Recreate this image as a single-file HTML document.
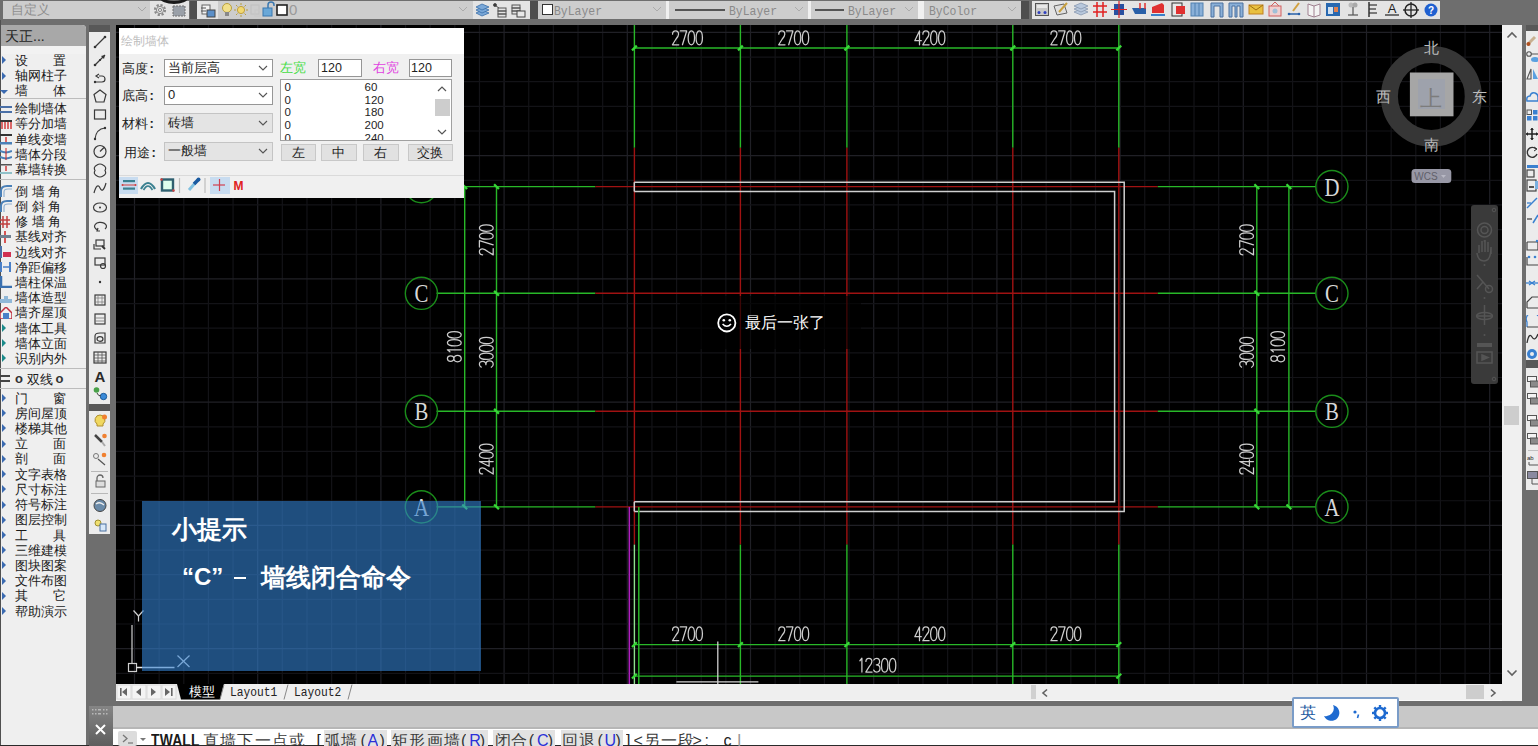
<!DOCTYPE html><html><head><meta charset="utf-8"><style>
*{margin:0;padding:0;box-sizing:border-box}
html,body{width:1538px;height:746px;overflow:hidden;background:#6e6e6e;font-family:"Liberation Sans",sans-serif}
.a{position:absolute}
</style></head><body>

<div class="a" style="left:0;top:0;width:1538px;height:25px;background:#6e6e6e"></div>
<div class="a" style="left:3px;top:1px;width:147px;height:18px;background:#cdcdcd"></div>
<div class="a" style="left:11px;top:2px;font-size:13px;line-height:16px;color:#8f8f8f">自定义</div>
<svg class="a" style="left:137px;top:6px" width="10" height="6"><polyline points="1,1 5,5 9,1" fill="none" stroke="#a8a8a8" stroke-width="1"/></svg>
<div class="a" style="left:150px;top:1px;width:39px;height:18px;background:#e4e4e4"></div>
<svg class="a" style="left:152px;top:2px" width="16" height="16" viewBox="0 0 16 16"><circle cx="8" cy="8" r="5" fill="none" stroke="#8a8a8a" stroke-width="2.2" stroke-dasharray="2.2 1.7"/><circle cx="8" cy="8" r="3.6" fill="none" stroke="#8a8a8a" stroke-width="1"/><circle cx="8" cy="8" r="1.6" fill="none" stroke="#8a8a8a" stroke-width="1"/></svg>
<svg class="a" style="left:171px;top:3px" width="16" height="15"><rect x="2" y="3" width="12" height="10" fill="#9aa0a8" stroke="#707070" stroke-width="1" stroke-dasharray="2 1"/></svg>
<svg class="a" style="left:158px;top:0" width="32" height="6"><path d="M 3 -3 A 13 5.5 0 0 0 29 -3" fill="none" stroke="#1a1a1a" stroke-width="3"/></svg>
<div class="a" style="left:190px;top:1px;width:7px;height:18px;background:#4e4e4e"></div>
<div class="a" style="left:197px;top:1px;width:21px;height:18px;background:#e4e4e4"></div>
<svg class="a" style="left:200px;top:2px" width="16" height="16"><rect x="2" y="3" width="8" height="9" fill="#f4f4f4" stroke="#666" stroke-width="1"/><rect x="7" y="8" width="8" height="7" fill="#5b8fc8" stroke="#444" stroke-width="1"/><line x1="1" y1="6" x2="6" y2="6" stroke="#555"/><line x1="1" y1="9" x2="6" y2="9" stroke="#555"/></svg>
<div class="a" style="left:218px;top:1px;width:255px;height:18px;background:#cdcdcd"></div>
<svg class="a" style="left:220px;top:1px" width="80" height="18"><circle cx="7" cy="7" r="4.5" fill="#f2e08a" stroke="#b8a040" stroke-width="1"/><rect x="5" y="11" width="4" height="4" fill="#888"/><circle cx="21" cy="9" r="3.6" fill="#f2d870" stroke="#c0a040"/><g stroke="#b8a040" stroke-width="1"><line x1="21" y1="2" x2="21" y2="4"/><line x1="21" y1="14" x2="21" y2="16"/><line x1="14" y1="9" x2="16" y2="9"/><line x1="26" y1="9" x2="28" y2="9"/><line x1="16" y1="4" x2="17.5" y2="5.5"/><line x1="26" y1="14" x2="24.5" y2="12.5"/><line x1="26" y1="4" x2="24.5" y2="5.5"/><line x1="16" y1="14" x2="17.5" y2="12.5"/></g><rect x="31" y="4" width="8" height="9" fill="none" stroke="#c0c0c0"/><rect x="35" y="9" width="5" height="6" fill="none" stroke="#c8c8c8"/><rect x="43" y="7" width="9" height="8" fill="#6aa8d8" stroke="#3a78b0"/><path d="M 48 7 V 4 A 3 3 0 0 1 54 4 V 5" fill="none" stroke="#3a78b0" stroke-width="1.5"/><rect x="57" y="4" width="10" height="10" fill="#fff" stroke="#222" stroke-width="1.6"/></svg>
<div class="a" style="left:289px;top:1px;font-size:15px;line-height:18px;color:#9a9a9a">0</div>
<svg class="a" style="left:458px;top:6px" width="10" height="6"><polyline points="1,1 5,5 9,1" fill="none" stroke="#ababab" stroke-width="1"/></svg>
<div class="a" style="left:473px;top:1px;width:57px;height:18px;background:#e4e4e4"></div>
<svg class="a" style="left:474px;top:1px" width="56" height="18"><g fill="#7aa8d8" stroke="#3a6ea8" stroke-width="0.8"><path d="M2 12 L8 15 L15 12 L8 9Z"/><path d="M2 9 L8 12 L15 9 L8 6Z"/><path d="M2 6 L8 9 L15 6 L8 3Z"/></g><g fill="none" stroke="#555" stroke-width="1"><rect x="24" y="7" width="8" height="3"/><rect x="24" y="10" width="8" height="3"/><rect x="24" y="13" width="8" height="3"/><circle cx="21" cy="4" r="1.5" fill="#333"/><line x1="22" y1="5" x2="25" y2="7"/></g><g fill="none" stroke="#555" stroke-width="1"><rect x="38" y="4" width="8" height="3"/><rect x="38" y="7" width="8" height="3"/><rect x="38" y="10" width="8" height="3"/><rect x="43" y="10" width="8" height="6" fill="#e8e8e8" stroke="#444"/></g></svg>
<div class="a" style="left:530px;top:1px;width:8px;height:18px;background:#4e4e4e"></div>
<div class="a" style="left:538px;top:1px;width:128px;height:18px;background:#cdcdcd"></div>
<div class="a" style="left:542px;top:4px;width:11px;height:11px;background:#fff;border:1.5px solid #333"></div><div class="a" style="left:554px;top:1px;font-family:'Liberation Mono';font-size:13px;line-height:18px;color:#8a8a8a;transform:scaleX(0.88);transform-origin:0 0;margin-top:1.5px">ByLayer</div>
<svg class="a" style="left:652px;top:6px" width="10" height="6"><polyline points="1,1 5,5 9,1" fill="none" stroke="#ababab" stroke-width="1"/></svg>
<div class="a" style="left:666px;top:1px;width:3px;height:18px;background:#f0f0f0"></div>
<div class="a" style="left:669px;top:1px;width:139px;height:18px;background:#cdcdcd"></div>
<div class="a" style="left:675px;top:9px;width:50px;height:1.5px;background:#555"></div><div class="a" style="left:729px;top:1px;font-family:'Liberation Mono';font-size:13px;line-height:18px;color:#8a8a8a;transform:scaleX(0.88);transform-origin:0 0;margin-top:1.5px">ByLayer</div>
<svg class="a" style="left:794px;top:6px" width="10" height="6"><polyline points="1,1 5,5 9,1" fill="none" stroke="#ababab" stroke-width="1"/></svg>
<div class="a" style="left:808px;top:1px;width:3px;height:18px;background:#f0f0f0"></div>
<div class="a" style="left:811px;top:1px;width:107px;height:18px;background:#cdcdcd"></div>
<div class="a" style="left:815px;top:9px;width:29px;height:1.5px;background:#555"></div><div class="a" style="left:848px;top:1px;font-family:'Liberation Mono';font-size:13px;line-height:18px;color:#8a8a8a;transform:scaleX(0.88);transform-origin:0 0;margin-top:1.5px">ByLayer</div>
<svg class="a" style="left:904px;top:6px" width="10" height="6"><polyline points="1,1 5,5 9,1" fill="none" stroke="#ababab" stroke-width="1"/></svg>
<div class="a" style="left:918px;top:1px;width:6px;height:18px;background:#f0f0f0"></div>
<div class="a" style="left:924px;top:1px;width:97px;height:18px;background:#cdcdcd"></div>
<div class="a" style="left:929px;top:1px;font-family:'Liberation Mono';font-size:13px;line-height:18px;color:#8a8a8a;transform:scaleX(0.88);transform-origin:0 0;margin-top:1.5px">ByColor</div>
<svg class="a" style="left:1007px;top:6px" width="10" height="6"><polyline points="1,1 5,5 9,1" fill="none" stroke="#ababab" stroke-width="1"/></svg>
<div class="a" style="left:1021px;top:1px;width:8px;height:18px;background:#4e4e4e"></div>
<div class="a" style="left:1032px;top:1px;width:408px;height:18px;background:#e4e4e4"></div>
<svg class="a" style="left:1033.6px;top:1px" width="16" height="18" viewBox="0 0 16 18"><rect x="1.5" y="2.5" width="13" height="12" fill="#c8c8c8" stroke="#555"/><rect x="3" y="4" width="10" height="3" fill="#e8e8e8"/><circle cx="5" cy="11.5" r="1.5" fill="#3040c0"/><circle cx="11" cy="11.5" r="1.5" fill="#3040c0"/></svg>
<svg class="a" style="left:1053.0px;top:1px" width="16" height="18" viewBox="0 0 16 18"><path d="M1 5 L11 3 L14 12 L4 14Z" fill="#e0e0e0" stroke="#666"/><line x1="6" y1="11" x2="14" y2="2" stroke="#c8a040" stroke-width="2"/></svg>
<svg class="a" style="left:1072.5px;top:1px" width="16" height="18" viewBox="0 0 16 18"><g fill="#b8c8dc" stroke="#8898b0" stroke-width="0.8"><path d="M1 11 L8 14 L15 11 L8 8Z"/><path d="M1 8 L8 11 L15 8 L8 5Z"/><path d="M1 5 L8 8 L15 5 L8 2Z"/></g></svg>
<svg class="a" style="left:1091.9px;top:1px" width="16" height="18" viewBox="0 0 16 18"><g stroke="#e02020" stroke-width="1.5"><line x1="5" y1="1" x2="5" y2="16"/><line x1="11" y1="1" x2="11" y2="16"/><line x1="1" y1="5" x2="15" y2="5"/><line x1="1" y1="11" x2="15" y2="11"/></g></svg>
<svg class="a" style="left:1111.4px;top:1px" width="16" height="18" viewBox="0 0 16 18"><rect x="3" y="3" width="10" height="11" fill="#2850a0"/><line x1="8" y1="0" x2="8" y2="17" stroke="#e02020" stroke-width="1.2"/><line x1="0" y1="8.5" x2="16" y2="8.5" stroke="#e02020" stroke-width="1"/></svg>
<svg class="a" style="left:1130.8px;top:1px" width="16" height="18" viewBox="0 0 16 18"><path d="M1 7 L15 7 L15 13 L4 13Z" fill="#2860a8"/><line x1="9" y1="2" x2="9" y2="8" stroke="#e03030" stroke-width="1.5"/><line x1="14" y1="2" x2="14" y2="8" stroke="#e03030" stroke-width="1.5"/></svg>
<svg class="a" style="left:1150.3px;top:1px" width="16" height="18" viewBox="0 0 16 18"><path d="M2 6 L12 2 L14 4 L14 12 L2 12Z" fill="#e03030"/><rect x="1" y="13" width="14" height="2" fill="#3a80c8"/></svg>
<svg class="a" style="left:1169.8px;top:1px" width="16" height="18" viewBox="0 0 16 18"><rect x="2" y="2" width="10" height="13" fill="#e8e8e8" stroke="#333"/><rect x="6" y="5" width="9" height="8" fill="#e03030"/></svg>
<svg class="a" style="left:1189.2px;top:1px" width="16" height="18" viewBox="0 0 16 18"><rect x="2" y="2" width="12" height="13" fill="#8ab0d8" stroke="#5080b0"/><line x1="6" y1="2" x2="6" y2="15" stroke="#5080b0"/><line x1="10" y1="2" x2="10" y2="15" stroke="#5080b0"/></svg>
<svg class="a" style="left:1208.6px;top:1px" width="16" height="18" viewBox="0 0 16 18"><path d="M2 16 V2 H14 V16 H11 V5 H5 V16Z" fill="#8ab0d8" stroke="#4a70a0"/></svg>
<svg class="a" style="left:1228.1px;top:1px" width="16" height="18" viewBox="0 0 16 18"><path d="M1 16 V2 H15 V16 H12 V5 H9 V16 H7 V5 H4 V16Z" fill="#8ab0d8" stroke="#4a70a0"/></svg>
<svg class="a" style="left:1247.5px;top:1px" width="16" height="18" viewBox="0 0 16 18"><rect x="1" y="4" width="14" height="9" fill="#e8c040" stroke="#c08020"/><polyline points="1,4 8,9 15,4" fill="none" stroke="#a07010"/></svg>
<svg class="a" style="left:1267.0px;top:1px" width="16" height="18" viewBox="0 0 16 18"><rect x="2" y="5" width="12" height="10" fill="#f0d0d0" stroke="#d06060"/><path d="M4 5 L8 1 L12 5" fill="none" stroke="#d06060"/><circle cx="8" cy="10" r="2.5" fill="#a0c0d8"/></svg>
<svg class="a" style="left:1286.4px;top:1px" width="16" height="18" viewBox="0 0 16 18"><line x1="2" y1="13" x2="14" y2="13" stroke="#2860a8" stroke-width="1.5"/><circle cx="3" cy="13" r="1.3" fill="#2860a8"/><circle cx="13" cy="13" r="1.3" fill="#2860a8"/><line x1="7" y1="10" x2="13" y2="2" stroke="#d0a040" stroke-width="2"/></svg>
<svg class="a" style="left:1305.9px;top:1px" width="16" height="18" viewBox="0 0 16 18"><path d="M2 3 L8 5 L14 3 V14 L8 16 L2 14Z" fill="#f4f4f4" stroke="#a08090"/><line x1="8" y1="5" x2="8" y2="16" stroke="#a08090"/></svg>
<svg class="a" style="left:1325.3px;top:1px" width="16" height="18" viewBox="0 0 16 18"><rect x="1" y="2" width="14" height="13" fill="#2868b0"/><rect x="3" y="6" width="5" height="7" fill="#d0e0f0"/><rect x="9" y="6" width="4" height="5" fill="#e08050"/></svg>
<svg class="a" style="left:1344.8px;top:1px" width="16" height="18" viewBox="0 0 16 18"><circle cx="6" cy="4" r="2.5" fill="#bbb"/><circle cx="10" cy="4" r="2.5" fill="#aaa"/><line x1="8" y1="6" x2="8" y2="14" stroke="#555" stroke-width="1.2"/><line x1="3" y1="14" x2="13" y2="14" stroke="#555" stroke-width="1.2"/></svg>
<svg class="a" style="left:1364.2px;top:1px" width="16" height="18" viewBox="0 0 16 18"><line x1="5" y1="1" x2="5" y2="16" stroke="#333" stroke-width="1.5"/><line x1="5" y1="4" x2="13" y2="4" stroke="#333" stroke-width="1.2"/><line x1="5" y1="8" x2="12" y2="8" stroke="#333" stroke-width="1.2"/><line x1="5" y1="12" x2="13" y2="12" stroke="#333" stroke-width="1.2"/></svg>
<svg class="a" style="left:1383.7px;top:1px" width="16" height="18" viewBox="0 0 16 18"><text x="8" y="12" font-family="Liberation Sans" font-size="13" text-anchor="middle" fill="#222">A</text><line x1="1" y1="14" x2="15" y2="14" stroke="#222" stroke-width="1.2"/></svg>
<svg class="a" style="left:1403.1px;top:1px" width="16" height="18" viewBox="0 0 16 18"><circle cx="8" cy="9" r="6" fill="none" stroke="#222" stroke-width="1.5"/><line x1="8" y1="1" x2="8" y2="17" stroke="#222" stroke-width="1.3"/><line x1="0" y1="9" x2="16" y2="9" stroke="#222" stroke-width="1.3"/></svg>
<svg class="a" style="left:1422.6px;top:1px" width="16" height="18" viewBox="0 0 16 18"><circle cx="8" cy="9" r="6.5" fill="#2060d0"/><text x="8" y="13" font-family="Liberation Sans" font-size="10" font-weight="bold" text-anchor="middle" fill="#fff">?</text></svg>
<div class="a" style="left:0;top:25px;width:86px;height:721px;background:#efefef;border-top-right-radius:4px"></div>
<div class="a" style="left:0;top:25px;width:86px;height:21px;background:#a8a8a8;border-top-right-radius:4px"></div>
<div class="a" style="left:0;top:46px;width:86px;height:8px;background:#f2f2f2;border-top-right-radius:4px"></div>
<div class="a" style="left:5px;top:28px;font-size:14px;line-height:17px;color:#222">天正...</div>
<div class="a" style="left:0;top:20px;width:1px;height:726px;background:#505050"></div>
<div class="a" style="left:15px;top:51.9px;font-size:13px;line-height:17px;color:#1a1a1a;font-weight:500">设</div>
<div class="a" style="left:53px;top:51.9px;font-size:13px;line-height:17px;color:#1a1a1a;font-weight:500">置</div>
<svg class="a" style="left:1px;top:56.4px" width="6" height="8"><path d="M1 0 L5 4 L1 8Z" fill="#3a6ab0"/></svg>
<div class="a" style="left:15px;top:67.0px;font-size:13px;line-height:17px;color:#1a1a1a;font-weight:500;white-space:pre">轴网柱子</div>
<svg class="a" style="left:1px;top:71.5px" width="6" height="8"><path d="M1 0 L5 4 L1 8Z" fill="#3a6ab0"/></svg>
<div class="a" style="left:15px;top:82.1px;font-size:13px;line-height:17px;color:#1a1a1a;font-weight:500">墙</div>
<div class="a" style="left:53px;top:82.1px;font-size:13px;line-height:17px;color:#1a1a1a;font-weight:500">体</div>
<svg class="a" style="left:0px;top:89.6px" width="9" height="5"><path d="M0 0 L8 0 L4 4Z" fill="#3a6ab0"/></svg>
<div class="a" style="left:15px;top:100.1px;font-size:13px;line-height:17px;color:#1a1a1a;font-weight:500;white-space:pre">绘制墙体</div>
<svg class="a" style="left:0px;top:102.6px" width="12" height="12"><rect x="0" y="3" width="12" height="2" fill="#4a70a8"/><rect x="0" y="8" width="12" height="2" fill="#4a70a8"/></svg>
<div class="a" style="left:15px;top:115.3px;font-size:13px;line-height:17px;color:#1a1a1a;font-weight:500;white-space:pre">等分加墙</div>
<svg class="a" style="left:0px;top:117.8px" width="12" height="12"><rect x="0" y="2" width="12" height="2" fill="#333"/><g stroke="#d02020" stroke-width="1.3"><line x1="2" y1="4" x2="2" y2="11"/><line x1="5" y1="4" x2="5" y2="11"/><line x1="8" y1="4" x2="8" y2="11"/><line x1="11" y1="4" x2="11" y2="11"/></g></svg>
<div class="a" style="left:15px;top:130.5px;font-size:13px;line-height:17px;color:#1a1a1a;font-weight:500;white-space:pre">单线变墙</div>
<svg class="a" style="left:0px;top:133.0px" width="12" height="12"><rect x="0" y="1" width="12" height="2" fill="#333"/><line x1="6" y1="4" x2="6" y2="9" stroke="#d02020" stroke-width="1.3"/><rect x="0" y="9" width="12" height="2.5" fill="#4a80b8"/></svg>
<div class="a" style="left:15px;top:145.7px;font-size:13px;line-height:17px;color:#1a1a1a;font-weight:500;white-space:pre">墙体分段</div>
<svg class="a" style="left:0px;top:148.2px" width="12" height="12"><path d="M0 3 Q6 6 12 3" fill="none" stroke="#4a80b8" stroke-width="2"/><path d="M0 9 Q6 12 12 9" fill="none" stroke="#4a80b8" stroke-width="2"/><line x1="6" y1="0" x2="6" y2="12" stroke="#d02020"/></svg>
<div class="a" style="left:15px;top:160.9px;font-size:13px;line-height:17px;color:#1a1a1a;font-weight:500;white-space:pre">幕墙转换</div>
<svg class="a" style="left:0px;top:163.4px" width="12" height="12"><rect x="0" y="1" width="12" height="1.5" fill="#555"/><line x1="6" y1="3" x2="6" y2="8" stroke="#d02020" stroke-width="1.3"/><rect x="0" y="9" width="12" height="2" fill="#90c0c8"/></svg>
<div class="a" style="left:15px;top:182.8px;font-size:13px;line-height:17px;color:#1a1a1a;font-weight:500;white-space:pre">倒 墙 角</div>
<svg class="a" style="left:0px;top:185.3px" width="12" height="12"><path d="M1 12 V6 Q1 1 7 1 H12" fill="none" stroke="#4a80b8" stroke-width="2"/><path d="M4 12 V7 Q4 4 8 4 H12" fill="none" stroke="#90b0d0" stroke-width="1.2"/></svg>
<div class="a" style="left:15px;top:197.8px;font-size:13px;line-height:17px;color:#1a1a1a;font-weight:500;white-space:pre">倒 斜 角</div>
<svg class="a" style="left:0px;top:200.3px" width="12" height="12"><path d="M1 12 V6 Q1 1 7 1 H12" fill="none" stroke="#4a80b8" stroke-width="2"/><path d="M4 12 V7 Q4 4 8 4 H12" fill="none" stroke="#90b0d0" stroke-width="1.2"/></svg>
<div class="a" style="left:15px;top:213.0px;font-size:13px;line-height:17px;color:#1a1a1a;font-weight:500;white-space:pre">修 墙 角</div>
<svg class="a" style="left:0px;top:215.5px" width="12" height="12"><g stroke="#c04040" stroke-width="1.5"><line x1="3" y1="0" x2="3" y2="12"/><line x1="7" y1="0" x2="7" y2="12"/><line x1="0" y1="4" x2="10" y2="4"/><line x1="0" y1="8" x2="10" y2="8"/></g></svg>
<div class="a" style="left:15px;top:228.1px;font-size:13px;line-height:17px;color:#1a1a1a;font-weight:500;white-space:pre">基线对齐</div>
<svg class="a" style="left:0px;top:230.6px" width="12" height="12"><line x1="5" y1="0" x2="5" y2="12" stroke="#d02020" stroke-width="1.5"/><rect x="0" y="4" width="11" height="3" fill="#708090"/></svg>
<div class="a" style="left:15px;top:243.5px;font-size:13px;line-height:17px;color:#1a1a1a;font-weight:500;white-space:pre">边线对齐</div>
<svg class="a" style="left:0px;top:246.0px" width="12" height="12"><rect x="0" y="0" width="2" height="12" fill="#4a70a8"/><rect x="3" y="6" width="8" height="5" fill="#d03050"/></svg>
<div class="a" style="left:15px;top:258.5px;font-size:13px;line-height:17px;color:#1a1a1a;font-weight:500;white-space:pre">净距偏移</div>
<svg class="a" style="left:0px;top:261.0px" width="12" height="12"><rect x="0" y="1" width="2" height="10" fill="#4a80c8"/><line x1="3" y1="6" x2="10" y2="6" stroke="#4a80c8" stroke-width="1.5"/><rect x="9" y="1" width="2" height="10" fill="#4a80c8"/></svg>
<div class="a" style="left:15px;top:273.5px;font-size:13px;line-height:17px;color:#1a1a1a;font-weight:500;white-space:pre">墙柱保温</div>
<svg class="a" style="left:0px;top:276.0px" width="12" height="12"><path d="M1 0 V11 H12" fill="none" stroke="#3a70b0" stroke-width="2.5"/></svg>
<div class="a" style="left:15px;top:289.1px;font-size:13px;line-height:17px;color:#1a1a1a;font-weight:500;white-space:pre">墙体造型</div>
<svg class="a" style="left:0px;top:291.6px" width="12" height="12"><path d="M0 11 H12 V7 H8 V4 H4 V7 H0Z" fill="#90b8d8"/></svg>
<div class="a" style="left:15px;top:304.1px;font-size:13px;line-height:17px;color:#1a1a1a;font-weight:500;white-space:pre">墙齐屋顶</div>
<svg class="a" style="left:0px;top:306.6px" width="12" height="12"><path d="M0 6 L6 0 L12 6 V12 H0Z" fill="#f0f0f0" stroke="#c03040" stroke-width="1.5"/><rect x="3" y="6" width="6" height="6" fill="#4a80c8"/></svg>
<div class="a" style="left:15px;top:319.5px;font-size:13px;line-height:17px;color:#1a1a1a;font-weight:500;white-space:pre">墙体工具</div>
<svg class="a" style="left:1px;top:324.0px" width="6" height="8"><path d="M1 0 L5 4 L1 8Z" fill="#1a8a8a"/></svg>
<div class="a" style="left:15px;top:334.5px;font-size:13px;line-height:17px;color:#1a1a1a;font-weight:500;white-space:pre">墙体立面</div>
<svg class="a" style="left:1px;top:339.0px" width="6" height="8"><path d="M1 0 L5 4 L1 8Z" fill="#1a8a8a"/></svg>
<div class="a" style="left:15px;top:349.5px;font-size:13px;line-height:17px;color:#1a1a1a;font-weight:500;white-space:pre">识别内外</div>
<svg class="a" style="left:1px;top:354.0px" width="6" height="8"><path d="M1 0 L5 4 L1 8Z" fill="#1a8a8a"/></svg>
<div class="a" style="left:15px;top:389.5px;font-size:13px;line-height:17px;color:#1a1a1a;font-weight:500">门</div>
<div class="a" style="left:53px;top:389.5px;font-size:13px;line-height:17px;color:#1a1a1a;font-weight:500">窗</div>
<svg class="a" style="left:1px;top:394.0px" width="6" height="8"><path d="M1 0 L5 4 L1 8Z" fill="#3a6ab0"/></svg>
<div class="a" style="left:15px;top:404.5px;font-size:13px;line-height:17px;color:#1a1a1a;font-weight:500;white-space:pre">房间屋顶</div>
<svg class="a" style="left:1px;top:409.0px" width="6" height="8"><path d="M1 0 L5 4 L1 8Z" fill="#3a6ab0"/></svg>
<div class="a" style="left:15px;top:419.5px;font-size:13px;line-height:17px;color:#1a1a1a;font-weight:500;white-space:pre">楼梯其他</div>
<svg class="a" style="left:1px;top:424.0px" width="6" height="8"><path d="M1 0 L5 4 L1 8Z" fill="#3a6ab0"/></svg>
<div class="a" style="left:15px;top:435.0px;font-size:13px;line-height:17px;color:#1a1a1a;font-weight:500">立</div>
<div class="a" style="left:53px;top:435.0px;font-size:13px;line-height:17px;color:#1a1a1a;font-weight:500">面</div>
<svg class="a" style="left:1px;top:439.5px" width="6" height="8"><path d="M1 0 L5 4 L1 8Z" fill="#3a6ab0"/></svg>
<div class="a" style="left:15px;top:450.1px;font-size:13px;line-height:17px;color:#1a1a1a;font-weight:500">剖</div>
<div class="a" style="left:53px;top:450.1px;font-size:13px;line-height:17px;color:#1a1a1a;font-weight:500">面</div>
<svg class="a" style="left:1px;top:454.6px" width="6" height="8"><path d="M1 0 L5 4 L1 8Z" fill="#3a6ab0"/></svg>
<div class="a" style="left:15px;top:465.5px;font-size:13px;line-height:17px;color:#1a1a1a;font-weight:500;white-space:pre">文字表格</div>
<svg class="a" style="left:1px;top:470.0px" width="6" height="8"><path d="M1 0 L5 4 L1 8Z" fill="#3a6ab0"/></svg>
<div class="a" style="left:15px;top:480.5px;font-size:13px;line-height:17px;color:#1a1a1a;font-weight:500;white-space:pre">尺寸标注</div>
<svg class="a" style="left:1px;top:485.0px" width="6" height="8"><path d="M1 0 L5 4 L1 8Z" fill="#3a6ab0"/></svg>
<div class="a" style="left:15px;top:496.1px;font-size:13px;line-height:17px;color:#1a1a1a;font-weight:500;white-space:pre">符号标注</div>
<svg class="a" style="left:1px;top:500.6px" width="6" height="8"><path d="M1 0 L5 4 L1 8Z" fill="#3a6ab0"/></svg>
<div class="a" style="left:15px;top:511.0px;font-size:13px;line-height:17px;color:#1a1a1a;font-weight:500;white-space:pre">图层控制</div>
<svg class="a" style="left:1px;top:515.5px" width="6" height="8"><path d="M1 0 L5 4 L1 8Z" fill="#3a6ab0"/></svg>
<div class="a" style="left:15px;top:526.5px;font-size:13px;line-height:17px;color:#1a1a1a;font-weight:500">工</div>
<div class="a" style="left:53px;top:526.5px;font-size:13px;line-height:17px;color:#1a1a1a;font-weight:500">具</div>
<svg class="a" style="left:1px;top:531.0px" width="6" height="8"><path d="M1 0 L5 4 L1 8Z" fill="#3a6ab0"/></svg>
<div class="a" style="left:15px;top:541.5px;font-size:13px;line-height:17px;color:#1a1a1a;font-weight:500;white-space:pre">三维建模</div>
<svg class="a" style="left:1px;top:546.0px" width="6" height="8"><path d="M1 0 L5 4 L1 8Z" fill="#3a6ab0"/></svg>
<div class="a" style="left:15px;top:556.5px;font-size:13px;line-height:17px;color:#1a1a1a;font-weight:500;white-space:pre">图块图案</div>
<svg class="a" style="left:1px;top:561.0px" width="6" height="8"><path d="M1 0 L5 4 L1 8Z" fill="#3a6ab0"/></svg>
<div class="a" style="left:15px;top:572.0px;font-size:13px;line-height:17px;color:#1a1a1a;font-weight:500;white-space:pre">文件布图</div>
<svg class="a" style="left:1px;top:576.5px" width="6" height="8"><path d="M1 0 L5 4 L1 8Z" fill="#3a6ab0"/></svg>
<div class="a" style="left:15px;top:587.0px;font-size:13px;line-height:17px;color:#1a1a1a;font-weight:500">其</div>
<div class="a" style="left:53px;top:587.0px;font-size:13px;line-height:17px;color:#1a1a1a;font-weight:500">它</div>
<svg class="a" style="left:1px;top:591.5px" width="6" height="8"><path d="M1 0 L5 4 L1 8Z" fill="#3a6ab0"/></svg>
<div class="a" style="left:15px;top:602.5px;font-size:13px;line-height:17px;color:#1a1a1a;font-weight:500;white-space:pre">帮助演示</div>
<svg class="a" style="left:1px;top:607.0px" width="6" height="8"><path d="M1 0 L5 4 L1 8Z" fill="#3a6ab0"/></svg>
<div class="a" style="left:0;top:97.5px;width:86px;height:1.2px;background:#bcbcbc"></div>
<div class="a" style="left:0;top:178.5px;width:86px;height:1.2px;background:#bcbcbc"></div>
<div class="a" style="left:0;top:368px;width:86px;height:1.2px;background:#bcbcbc"></div>
<div class="a" style="left:0;top:387.5px;width:86px;height:1.2px;background:#bcbcbc"></div>
<div class="a" style="left:0px;top:375px;width:10px;height:2px;background:#444"></div>
<div class="a" style="left:0px;top:380px;width:10px;height:2px;background:#444"></div>
<div class="a" style="left:15px;top:370px;font-size:13px;line-height:17px;color:#333;font-weight:bold">o</div>
<div class="a" style="left:27px;top:371px;font-size:13px;line-height:17px;color:#1a1a1a;font-weight:500">双线</div>
<div class="a" style="left:55.5px;top:370px;font-size:13px;line-height:17px;color:#333;font-weight:bold">o</div>
<div class="a" style="left:89px;top:25px;width:21px;height:7px;background:#585858"></div>
<div class="a" style="left:89px;top:32px;width:21px;height:372px;background:#ececec"></div>
<div class="a" style="left:89px;top:404px;width:21px;height:7px;background:#585858"></div>
<div class="a" style="left:89px;top:411px;width:21px;height:123px;background:#ececec"></div>
<svg class="a" style="left:91.5px;top:34px" width="16" height="16" viewBox="0 0 16 16"><line x1="3" y1="13" x2="13" y2="3" stroke="#3a3a3a" fill="none" stroke-width="1.2"/><circle cx="3" cy="13" r="1.3" fill="#333"/><circle cx="13" cy="3" r="1.3" fill="#333"/></svg>
<svg class="a" style="left:91.5px;top:52px" width="16" height="16" viewBox="0 0 16 16"><line x1="3" y1="13" x2="13" y2="3" stroke="#3a3a3a" fill="none" stroke-width="1.2"/><circle cx="3" cy="13" r="1.3" fill="#333"/><circle cx="8" cy="8" r="1.1" fill="#333"/><path d="M13 3 L9 4 L12 7Z" fill="#333"/></svg>
<svg class="a" style="left:91.5px;top:70px" width="16" height="16" viewBox="0 0 16 16"><path d="M3 12 H10 A3 3 0 0 0 10 6 H7" stroke="#3a3a3a" fill="none" stroke-width="1.2"/><path d="M7 4 L4 6 L7 8" stroke="#3a3a3a" fill="none" stroke-width="1.2"/><circle cx="3" cy="12" r="1.2" fill="#333"/></svg>
<svg class="a" style="left:91.5px;top:88px" width="16" height="16" viewBox="0 0 16 16"><path d="M8 2 L14 6.5 L12 14 H4 L2 6.5Z" stroke="#3a3a3a" fill="none" stroke-width="1.2"/></svg>
<svg class="a" style="left:91.5px;top:106px" width="16" height="16" viewBox="0 0 16 16"><rect x="2.5" y="4" width="11" height="9" stroke="#3a3a3a" fill="none" stroke-width="1.2"/></svg>
<svg class="a" style="left:91.5px;top:125px" width="16" height="16" viewBox="0 0 16 16"><path d="M3 14 Q4 4 13 3" stroke="#3a3a3a" fill="none" stroke-width="1.2"/><circle cx="3" cy="14" r="1.2" fill="#333"/><circle cx="13" cy="3" r="1.2" fill="#333"/></svg>
<svg class="a" style="left:91.5px;top:143px" width="16" height="16" viewBox="0 0 16 16"><circle cx="8" cy="8.5" r="6" stroke="#3a3a3a" fill="none" stroke-width="1.2"/><line x1="8" y1="8.5" x2="12" y2="4.5" stroke="#3a3a3a" fill="none" stroke-width="1.2"/></svg>
<svg class="a" style="left:91.5px;top:162px" width="16" height="16" viewBox="0 0 16 16"><path d="M5 3 Q8 1 11 3 Q15 5 13 8.5 Q15 12 11 14 Q8 16 5 14 Q1 12 3 8.5 Q1 5 5 3Z" stroke="#3a3a3a" fill="none" stroke-width="1.2"/></svg>
<svg class="a" style="left:91.5px;top:180px" width="16" height="16" viewBox="0 0 16 16"><path d="M2 13 Q5 2 8 8 Q11 14 14 3" stroke="#3a3a3a" fill="none" stroke-width="1.2"/></svg>
<svg class="a" style="left:91.5px;top:199px" width="16" height="16" viewBox="0 0 16 16"><ellipse cx="8" cy="8.5" rx="6.5" ry="4.5" stroke="#3a3a3a" fill="none" stroke-width="1.2"/><circle cx="8" cy="8.5" r="1" fill="#333"/></svg>
<svg class="a" style="left:91.5px;top:218px" width="16" height="16" viewBox="0 0 16 16"><path d="M13 11 A6 4 0 1 0 6 12" stroke="#3a3a3a" fill="none" stroke-width="1.2"/><path d="M6 10 L5 13 L8 13" stroke="#3a3a3a" fill="none" stroke-width="1.2"/></svg>
<svg class="a" style="left:91.5px;top:236px" width="16" height="16" viewBox="0 0 16 16"><rect x="4" y="4" width="8" height="6" stroke="#3a3a3a" fill="none" stroke-width="1.2"/><path d="M2 8 L2 13 L9 13" stroke="#3a3a3a" fill="none" stroke-width="1.2"/><path d="M10 10 L13 13" stroke="#333" stroke-width="2"/></svg>
<svg class="a" style="left:91.5px;top:255px" width="16" height="16" viewBox="0 0 16 16"><rect x="3" y="3" width="10" height="7" stroke="#3a3a3a" fill="none" stroke-width="1.2"/><circle cx="11" cy="11" r="2.5" stroke="#3a3a3a" fill="none" stroke-width="1.2"/></svg>
<svg class="a" style="left:91.5px;top:274px" width="16" height="16" viewBox="0 0 16 16"><circle cx="8" cy="8" r="1.2" fill="#333"/></svg>
<svg class="a" style="left:91.5px;top:292px" width="16" height="16" viewBox="0 0 16 16"><rect x="3" y="3" width="10" height="10" stroke="#3a3a3a" fill="none" stroke-width="1.2"/><path d="M3 6 L13 6 M3 10 L13 10 M6 3 L6 13 M10 3 L10 13" stroke="#777" stroke-width="0.7"/></svg>
<svg class="a" style="left:91.5px;top:311px" width="16" height="16" viewBox="0 0 16 16"><rect x="3" y="3" width="10" height="10" stroke="#3a3a3a" fill="none" stroke-width="1.2"/><path d="M3 7 L13 7 M3 10 L13 10" stroke="#777" stroke-width="0.8"/></svg>
<svg class="a" style="left:91.5px;top:330px" width="16" height="16" viewBox="0 0 16 16"><path d="M3 13 V6 Q3 3 8 3 H13 V13Z" stroke="#3a3a3a" fill="none" stroke-width="1.2"/><ellipse cx="8" cy="9" rx="3" ry="2.3" stroke="#3a3a3a" fill="none" stroke-width="1.2"/></svg>
<svg class="a" style="left:91.5px;top:349px" width="16" height="16" viewBox="0 0 16 16"><rect x="2" y="3" width="12" height="11" stroke="#3a3a3a" fill="none" stroke-width="1.2"/><path d="M2 6 H14 M2 9 H14 M2 12 H14 M6 3 V14 M10 3 V14" stroke="#555" stroke-width="0.8"/></svg>
<svg class="a" style="left:91.5px;top:368px" width="16" height="16" viewBox="0 0 16 16"><text x="8" y="14" text-anchor="middle" font-family="Liberation Sans" font-size="15" font-weight="bold" fill="#2a2a2a">A</text></svg>
<svg class="a" style="left:91.5px;top:385px" width="16" height="16" viewBox="0 0 16 16"><circle cx="4.5" cy="5" r="2.8" fill="#48a048"/><circle cx="11.5" cy="11.5" r="3.2" fill="#3a8ad8" stroke="#1a5a9a"/><path d="M5 8 Q6 11 9 11" fill="none" stroke="#444"/></svg>
<svg class="a" style="left:91.5px;top:413px" width="16" height="16" viewBox="0 0 16 16"><path d="M8 2 A5 5 0 0 1 11 11 V13 H5 V11 A5 5 0 0 1 8 2Z" fill="#f0d860" stroke="#b09030"/><circle cx="12.5" cy="4" r="2.5" fill="#f08030"/></svg>
<svg class="a" style="left:91.5px;top:432px" width="16" height="16" viewBox="0 0 16 16"><path d="M3 3 L10 10" stroke="#444" stroke-width="2.5"/><path d="M10 10 L13 14" stroke="#aaa" stroke-width="2"/><circle cx="12.5" cy="4" r="2.3" fill="#f08030"/></svg>
<svg class="a" style="left:91.5px;top:451px" width="16" height="16" viewBox="0 0 16 16"><circle cx="4" cy="5" r="2.5" fill="none" stroke="#777"/><circle cx="12" cy="4" r="2.3" fill="#f08030"/><path d="M6 8 L13 14" stroke="#555" stroke-width="1.2"/></svg>
<svg class="a" style="left:91.5px;top:473px" width="16" height="16" viewBox="0 0 16 16"><rect x="4" y="8" width="9" height="6" fill="#ddd" stroke="#666"/><path d="M5 8 V5 A3 3 0 0 1 11 5" fill="none" stroke="#666" stroke-width="1.3"/></svg>
<svg class="a" style="left:91.5px;top:497px" width="16" height="16" viewBox="0 0 16 16"><circle cx="8" cy="8.5" r="6" fill="#6a8aa8" stroke="#444"/><path d="M4 7 Q8 4 12 8" fill="none" stroke="#eee" stroke-width="1.3"/></svg>
<svg class="a" style="left:91.5px;top:516px" width="16" height="16" viewBox="0 0 16 16"><circle cx="6" cy="7" r="3" fill="#f0e070" stroke="#a09030"/><rect x="8" y="8" width="6" height="7" fill="#d8e8f8" stroke="#4a70a0"/></svg>
<div class="a" style="left:91px;top:470.5px;width:17px;height:1px;background:#b8b8b8"></div>
<div class="a" style="left:91px;top:493px;width:17px;height:1px;background:#b8b8b8"></div>
<div class="a" style="left:116px;top:25px;width:1386px;height:659px;background:#000;overflow:hidden">
<svg width="1386" height="659" style="position:absolute;left:0;top:0"><line x1="18.50" y1="0" x2="18.50" y2="660" stroke="#202026" stroke-width="1.2"/>
<line x1="43.14" y1="0" x2="43.14" y2="660" stroke="#131317" stroke-width="1.2"/>
<line x1="67.78" y1="0" x2="67.78" y2="660" stroke="#131317" stroke-width="1.2"/>
<line x1="92.42" y1="0" x2="92.42" y2="660" stroke="#131317" stroke-width="1.2"/>
<line x1="117.06" y1="0" x2="117.06" y2="660" stroke="#131317" stroke-width="1.2"/>
<line x1="141.70" y1="0" x2="141.70" y2="660" stroke="#202026" stroke-width="1.2"/>
<line x1="166.34" y1="0" x2="166.34" y2="660" stroke="#131317" stroke-width="1.2"/>
<line x1="190.98" y1="0" x2="190.98" y2="660" stroke="#131317" stroke-width="1.2"/>
<line x1="215.62" y1="0" x2="215.62" y2="660" stroke="#131317" stroke-width="1.2"/>
<line x1="240.26" y1="0" x2="240.26" y2="660" stroke="#131317" stroke-width="1.2"/>
<line x1="264.90" y1="0" x2="264.90" y2="660" stroke="#202026" stroke-width="1.2"/>
<line x1="289.54" y1="0" x2="289.54" y2="660" stroke="#131317" stroke-width="1.2"/>
<line x1="314.18" y1="0" x2="314.18" y2="660" stroke="#131317" stroke-width="1.2"/>
<line x1="338.82" y1="0" x2="338.82" y2="660" stroke="#131317" stroke-width="1.2"/>
<line x1="363.46" y1="0" x2="363.46" y2="660" stroke="#131317" stroke-width="1.2"/>
<line x1="388.10" y1="0" x2="388.10" y2="660" stroke="#202026" stroke-width="1.2"/>
<line x1="412.74" y1="0" x2="412.74" y2="660" stroke="#131317" stroke-width="1.2"/>
<line x1="437.38" y1="0" x2="437.38" y2="660" stroke="#131317" stroke-width="1.2"/>
<line x1="462.02" y1="0" x2="462.02" y2="660" stroke="#131317" stroke-width="1.2"/>
<line x1="486.66" y1="0" x2="486.66" y2="660" stroke="#131317" stroke-width="1.2"/>
<line x1="511.30" y1="0" x2="511.30" y2="660" stroke="#202026" stroke-width="1.2"/>
<line x1="535.94" y1="0" x2="535.94" y2="660" stroke="#131317" stroke-width="1.2"/>
<line x1="560.58" y1="0" x2="560.58" y2="660" stroke="#131317" stroke-width="1.2"/>
<line x1="585.22" y1="0" x2="585.22" y2="660" stroke="#131317" stroke-width="1.2"/>
<line x1="609.86" y1="0" x2="609.86" y2="660" stroke="#131317" stroke-width="1.2"/>
<line x1="634.50" y1="0" x2="634.50" y2="660" stroke="#202026" stroke-width="1.2"/>
<line x1="659.14" y1="0" x2="659.14" y2="660" stroke="#131317" stroke-width="1.2"/>
<line x1="683.78" y1="0" x2="683.78" y2="660" stroke="#131317" stroke-width="1.2"/>
<line x1="708.42" y1="0" x2="708.42" y2="660" stroke="#131317" stroke-width="1.2"/>
<line x1="733.06" y1="0" x2="733.06" y2="660" stroke="#131317" stroke-width="1.2"/>
<line x1="757.70" y1="0" x2="757.70" y2="660" stroke="#202026" stroke-width="1.2"/>
<line x1="782.34" y1="0" x2="782.34" y2="660" stroke="#131317" stroke-width="1.2"/>
<line x1="806.98" y1="0" x2="806.98" y2="660" stroke="#131317" stroke-width="1.2"/>
<line x1="831.62" y1="0" x2="831.62" y2="660" stroke="#131317" stroke-width="1.2"/>
<line x1="856.26" y1="0" x2="856.26" y2="660" stroke="#131317" stroke-width="1.2"/>
<line x1="880.90" y1="0" x2="880.90" y2="660" stroke="#202026" stroke-width="1.2"/>
<line x1="905.54" y1="0" x2="905.54" y2="660" stroke="#131317" stroke-width="1.2"/>
<line x1="930.18" y1="0" x2="930.18" y2="660" stroke="#131317" stroke-width="1.2"/>
<line x1="954.82" y1="0" x2="954.82" y2="660" stroke="#131317" stroke-width="1.2"/>
<line x1="979.46" y1="0" x2="979.46" y2="660" stroke="#131317" stroke-width="1.2"/>
<line x1="1004.10" y1="0" x2="1004.10" y2="660" stroke="#202026" stroke-width="1.2"/>
<line x1="1028.74" y1="0" x2="1028.74" y2="660" stroke="#131317" stroke-width="1.2"/>
<line x1="1053.38" y1="0" x2="1053.38" y2="660" stroke="#131317" stroke-width="1.2"/>
<line x1="1078.02" y1="0" x2="1078.02" y2="660" stroke="#131317" stroke-width="1.2"/>
<line x1="1102.66" y1="0" x2="1102.66" y2="660" stroke="#131317" stroke-width="1.2"/>
<line x1="1127.30" y1="0" x2="1127.30" y2="660" stroke="#202026" stroke-width="1.2"/>
<line x1="1151.94" y1="0" x2="1151.94" y2="660" stroke="#131317" stroke-width="1.2"/>
<line x1="1176.58" y1="0" x2="1176.58" y2="660" stroke="#131317" stroke-width="1.2"/>
<line x1="1201.22" y1="0" x2="1201.22" y2="660" stroke="#131317" stroke-width="1.2"/>
<line x1="1225.86" y1="0" x2="1225.86" y2="660" stroke="#131317" stroke-width="1.2"/>
<line x1="1250.50" y1="0" x2="1250.50" y2="660" stroke="#202026" stroke-width="1.2"/>
<line x1="1275.14" y1="0" x2="1275.14" y2="660" stroke="#131317" stroke-width="1.2"/>
<line x1="1299.78" y1="0" x2="1299.78" y2="660" stroke="#131317" stroke-width="1.2"/>
<line x1="1324.42" y1="0" x2="1324.42" y2="660" stroke="#131317" stroke-width="1.2"/>
<line x1="1349.06" y1="0" x2="1349.06" y2="660" stroke="#131317" stroke-width="1.2"/>
<line x1="1373.70" y1="0" x2="1373.70" y2="660" stroke="#202026" stroke-width="1.2"/>
<line x1="0" y1="7.40" x2="1386" y2="7.40" stroke="#202026" stroke-width="1.2"/>
<line x1="0" y1="32.05" x2="1386" y2="32.05" stroke="#131317" stroke-width="1.2"/>
<line x1="0" y1="56.70" x2="1386" y2="56.70" stroke="#131317" stroke-width="1.2"/>
<line x1="0" y1="81.35" x2="1386" y2="81.35" stroke="#131317" stroke-width="1.2"/>
<line x1="0" y1="106.00" x2="1386" y2="106.00" stroke="#131317" stroke-width="1.2"/>
<line x1="0" y1="130.65" x2="1386" y2="130.65" stroke="#202026" stroke-width="1.2"/>
<line x1="0" y1="155.30" x2="1386" y2="155.30" stroke="#131317" stroke-width="1.2"/>
<line x1="0" y1="179.95" x2="1386" y2="179.95" stroke="#131317" stroke-width="1.2"/>
<line x1="0" y1="204.60" x2="1386" y2="204.60" stroke="#131317" stroke-width="1.2"/>
<line x1="0" y1="229.25" x2="1386" y2="229.25" stroke="#131317" stroke-width="1.2"/>
<line x1="0" y1="253.90" x2="1386" y2="253.90" stroke="#202026" stroke-width="1.2"/>
<line x1="0" y1="278.55" x2="1386" y2="278.55" stroke="#131317" stroke-width="1.2"/>
<line x1="0" y1="303.20" x2="1386" y2="303.20" stroke="#131317" stroke-width="1.2"/>
<line x1="0" y1="327.85" x2="1386" y2="327.85" stroke="#131317" stroke-width="1.2"/>
<line x1="0" y1="352.50" x2="1386" y2="352.50" stroke="#131317" stroke-width="1.2"/>
<line x1="0" y1="377.15" x2="1386" y2="377.15" stroke="#202026" stroke-width="1.2"/>
<line x1="0" y1="401.80" x2="1386" y2="401.80" stroke="#131317" stroke-width="1.2"/>
<line x1="0" y1="426.45" x2="1386" y2="426.45" stroke="#131317" stroke-width="1.2"/>
<line x1="0" y1="451.10" x2="1386" y2="451.10" stroke="#131317" stroke-width="1.2"/>
<line x1="0" y1="475.75" x2="1386" y2="475.75" stroke="#131317" stroke-width="1.2"/>
<line x1="0" y1="500.40" x2="1386" y2="500.40" stroke="#202026" stroke-width="1.2"/>
<line x1="0" y1="525.05" x2="1386" y2="525.05" stroke="#131317" stroke-width="1.2"/>
<line x1="0" y1="549.70" x2="1386" y2="549.70" stroke="#131317" stroke-width="1.2"/>
<line x1="0" y1="574.35" x2="1386" y2="574.35" stroke="#131317" stroke-width="1.2"/>
<line x1="0" y1="599.00" x2="1386" y2="599.00" stroke="#131317" stroke-width="1.2"/>
<line x1="0" y1="623.65" x2="1386" y2="623.65" stroke="#202026" stroke-width="1.2"/>
<line x1="0" y1="648.30" x2="1386" y2="648.30" stroke="#131317" stroke-width="1.2"/><line x1="518.40" y1="0.00" x2="518.40" y2="122.80" stroke="#28b828" stroke-width="1.4" />
<line x1="518.40" y1="122.80" x2="518.40" y2="519.60" stroke="#a01212" stroke-width="1.4" />
<line x1="624.40" y1="0.00" x2="624.40" y2="122.80" stroke="#28b828" stroke-width="1.4" />
<line x1="624.40" y1="122.80" x2="624.40" y2="519.60" stroke="#a01212" stroke-width="1.4" />
<line x1="624.40" y1="519.60" x2="624.40" y2="659.00" stroke="#28b828" stroke-width="1.4" />
<line x1="730.90" y1="0.00" x2="730.90" y2="122.80" stroke="#28b828" stroke-width="1.4" />
<line x1="730.90" y1="122.80" x2="730.90" y2="519.60" stroke="#a01212" stroke-width="1.4" />
<line x1="730.90" y1="519.60" x2="730.90" y2="659.00" stroke="#28b828" stroke-width="1.4" />
<line x1="896.80" y1="0.00" x2="896.80" y2="122.80" stroke="#28b828" stroke-width="1.4" />
<line x1="896.80" y1="122.80" x2="896.80" y2="519.60" stroke="#a01212" stroke-width="1.4" />
<line x1="896.80" y1="519.60" x2="896.80" y2="659.00" stroke="#28b828" stroke-width="1.4" />
<line x1="1002.80" y1="0.00" x2="1002.80" y2="122.80" stroke="#28b828" stroke-width="1.4" />
<line x1="1002.80" y1="122.80" x2="1002.80" y2="519.60" stroke="#a01212" stroke-width="1.4" />
<line x1="1002.80" y1="519.60" x2="1002.80" y2="659.00" stroke="#28b828" stroke-width="1.4" />
<line x1="518.40" y1="519.60" x2="518.40" y2="659.00" stroke="#8ee08e" stroke-width="1.4" />
<line x1="320.50" y1="161.60" x2="479.40" y2="161.60" stroke="#28b828" stroke-width="1.4" />
<line x1="479.40" y1="161.60" x2="1041.80" y2="161.60" stroke="#a01212" stroke-width="1.4" />
<line x1="1041.80" y1="161.60" x2="1199.70" y2="161.60" stroke="#28b828" stroke-width="1.4" />
<line x1="320.50" y1="268.30" x2="479.40" y2="268.30" stroke="#28b828" stroke-width="1.4" />
<line x1="479.40" y1="268.30" x2="1041.80" y2="268.30" stroke="#a01212" stroke-width="1.4" />
<line x1="1041.80" y1="268.30" x2="1199.70" y2="268.30" stroke="#28b828" stroke-width="1.4" />
<line x1="320.50" y1="386.30" x2="479.40" y2="386.30" stroke="#28b828" stroke-width="1.4" />
<line x1="479.40" y1="386.30" x2="1041.80" y2="386.30" stroke="#a01212" stroke-width="1.4" />
<line x1="1041.80" y1="386.30" x2="1199.70" y2="386.30" stroke="#28b828" stroke-width="1.4" />
<line x1="320.50" y1="481.90" x2="479.40" y2="481.90" stroke="#28b828" stroke-width="1.4" />
<line x1="479.40" y1="481.90" x2="1041.80" y2="481.90" stroke="#a01212" stroke-width="1.4" />
<line x1="1041.80" y1="481.90" x2="1199.70" y2="481.90" stroke="#28b828" stroke-width="1.4" />
<line x1="518.40" y1="23.00" x2="1002.80" y2="23.00" stroke="#28b828" stroke-width="1.4" />
<line x1="518.40" y1="619.60" x2="1002.80" y2="619.60" stroke="#28b828" stroke-width="1.4" />
<line x1="518.40" y1="651.10" x2="1002.80" y2="651.10" stroke="#28b828" stroke-width="1.4" />
<line x1="348.70" y1="161.60" x2="348.70" y2="481.90" stroke="#28b828" stroke-width="1.4" />
<line x1="380.50" y1="161.60" x2="380.50" y2="481.90" stroke="#28b828" stroke-width="1.4" />
<line x1="1140.80" y1="161.60" x2="1140.80" y2="481.90" stroke="#28b828" stroke-width="1.4" />
<line x1="1172.90" y1="161.60" x2="1172.90" y2="481.90" stroke="#28b828" stroke-width="1.4" />
<line x1="516.00" y1="25.40" x2="520.80" y2="20.60" stroke="#38d838" stroke-width="2.2" />
<line x1="516.00" y1="622.00" x2="520.80" y2="617.20" stroke="#38d838" stroke-width="2.2" />
<line x1="622.00" y1="25.40" x2="626.80" y2="20.60" stroke="#38d838" stroke-width="2.2" />
<line x1="622.00" y1="622.00" x2="626.80" y2="617.20" stroke="#38d838" stroke-width="2.2" />
<line x1="728.50" y1="25.40" x2="733.30" y2="20.60" stroke="#38d838" stroke-width="2.2" />
<line x1="728.50" y1="622.00" x2="733.30" y2="617.20" stroke="#38d838" stroke-width="2.2" />
<line x1="894.40" y1="25.40" x2="899.20" y2="20.60" stroke="#38d838" stroke-width="2.2" />
<line x1="894.40" y1="622.00" x2="899.20" y2="617.20" stroke="#38d838" stroke-width="2.2" />
<line x1="1000.40" y1="25.40" x2="1005.20" y2="20.60" stroke="#38d838" stroke-width="2.2" />
<line x1="1000.40" y1="622.00" x2="1005.20" y2="617.20" stroke="#38d838" stroke-width="2.2" />
<line x1="516.00" y1="653.50" x2="520.80" y2="648.70" stroke="#38d838" stroke-width="2.2" />
<line x1="1000.40" y1="653.50" x2="1005.20" y2="648.70" stroke="#38d838" stroke-width="2.2" />
<line x1="378.10" y1="159.20" x2="382.90" y2="164.00" stroke="#38d838" stroke-width="2.2" />
<line x1="1138.40" y1="159.20" x2="1143.20" y2="164.00" stroke="#38d838" stroke-width="2.2" />
<line x1="378.10" y1="265.90" x2="382.90" y2="270.70" stroke="#38d838" stroke-width="2.2" />
<line x1="1138.40" y1="265.90" x2="1143.20" y2="270.70" stroke="#38d838" stroke-width="2.2" />
<line x1="378.10" y1="383.90" x2="382.90" y2="388.70" stroke="#38d838" stroke-width="2.2" />
<line x1="1138.40" y1="383.90" x2="1143.20" y2="388.70" stroke="#38d838" stroke-width="2.2" />
<line x1="378.10" y1="479.50" x2="382.90" y2="484.30" stroke="#38d838" stroke-width="2.2" />
<line x1="1138.40" y1="479.50" x2="1143.20" y2="484.30" stroke="#38d838" stroke-width="2.2" />
<line x1="346.30" y1="159.20" x2="351.10" y2="164.00" stroke="#38d838" stroke-width="2.2" />
<line x1="1170.50" y1="159.20" x2="1175.30" y2="164.00" stroke="#38d838" stroke-width="2.2" />
<line x1="346.30" y1="479.50" x2="351.10" y2="484.30" stroke="#38d838" stroke-width="2.2" />
<line x1="1170.50" y1="479.50" x2="1175.30" y2="484.30" stroke="#38d838" stroke-width="2.2" />
<polyline points="518.3,157.2 1008.2,157.2 1008.2,486.4 518.3,486.4" fill="none" stroke="#cfcfcf" stroke-width="1.5"/>
<polyline points="518.3,166.5 998.5999999999999,166.5 998.5999999999999,476.7 518.3,476.7" fill="none" stroke="#cfcfcf" stroke-width="1.5"/>
<line x1="518.30" y1="157.20" x2="518.30" y2="166.50" stroke="#cfcfcf" stroke-width="1.5" />
<line x1="518.30" y1="476.70" x2="518.30" y2="486.40" stroke="#cfcfcf" stroke-width="1.5" />
<line x1="513.30" y1="482.00" x2="513.30" y2="659.00" stroke="#b020c0" stroke-width="1.5" />
<line x1="522.80" y1="482.00" x2="522.80" y2="659.00" stroke="#28b828" stroke-width="1.5" />
<circle cx="305.4" cy="161.6" r="16.1" fill="none" stroke="#1a8c1a" stroke-width="1.4"/>
<text x="305.4" y="170.79999999999998" text-anchor="middle" font-family="Liberation Serif" font-size="26" fill="#d8d8d8" transform="translate(305.4 0) scale(0.8 1) translate(-305.4 0)">D</text>
<circle cx="1215.9" cy="161.6" r="16.1" fill="none" stroke="#1a8c1a" stroke-width="1.4"/>
<text x="1215.9" y="170.79999999999998" text-anchor="middle" font-family="Liberation Serif" font-size="26" fill="#d8d8d8" transform="translate(1215.9 0) scale(0.8 1) translate(-1215.9 0)">D</text>
<circle cx="305.4" cy="268.3" r="16.1" fill="none" stroke="#1a8c1a" stroke-width="1.4"/>
<text x="305.4" y="277.5" text-anchor="middle" font-family="Liberation Serif" font-size="26" fill="#d8d8d8" transform="translate(305.4 0) scale(0.8 1) translate(-305.4 0)">C</text>
<circle cx="1215.9" cy="268.3" r="16.1" fill="none" stroke="#1a8c1a" stroke-width="1.4"/>
<text x="1215.9" y="277.5" text-anchor="middle" font-family="Liberation Serif" font-size="26" fill="#d8d8d8" transform="translate(1215.9 0) scale(0.8 1) translate(-1215.9 0)">C</text>
<circle cx="305.4" cy="386.3" r="16.1" fill="none" stroke="#1a8c1a" stroke-width="1.4"/>
<text x="305.4" y="395.5" text-anchor="middle" font-family="Liberation Serif" font-size="26" fill="#d8d8d8" transform="translate(305.4 0) scale(0.8 1) translate(-305.4 0)">B</text>
<circle cx="1215.9" cy="386.3" r="16.1" fill="none" stroke="#1a8c1a" stroke-width="1.4"/>
<text x="1215.9" y="395.5" text-anchor="middle" font-family="Liberation Serif" font-size="26" fill="#d8d8d8" transform="translate(1215.9 0) scale(0.8 1) translate(-1215.9 0)">B</text>
<circle cx="305.4" cy="481.9" r="16.1" fill="none" stroke="#1a8c1a" stroke-width="1.4"/>
<text x="305.4" y="491.09999999999997" text-anchor="middle" font-family="Liberation Serif" font-size="26" fill="#d8d8d8" transform="translate(305.4 0) scale(0.8 1) translate(-305.4 0)">A</text>
<circle cx="1215.9" cy="481.9" r="16.1" fill="none" stroke="#1a8c1a" stroke-width="1.4"/>
<text x="1215.9" y="491.09999999999997" text-anchor="middle" font-family="Liberation Serif" font-size="26" fill="#d8d8d8" transform="translate(1215.9 0) scale(0.8 1) translate(-1215.9 0)">A</text>
<g transform="translate(571.40 12.85) translate(-15.15 -7)" fill="none" stroke="#cdcdcd" stroke-width="1.25" stroke-linecap="round" stroke-linejoin="round"><path transform="translate(0.0 0)" d="M0.3 3.3 C0.3 1.2 1.6 0.1 3.3 0.1 C5 0.1 6.3 1.3 6.3 3.3 C6.3 5.2 5 6.8 3.6 8.4 L0.2 13.9 L6.5 13.9"/><path transform="translate(7.9 0)" d="M0.1 0.1 L6.5 0.1 L2.3 13.9"/><path transform="translate(15.8 0)" d="M3.3 0.1 C5.2 0.1 6.5 3 6.5 7 C6.5 11 5.2 13.9 3.3 13.9 C1.4 13.9 0.1 11 0.1 7 C0.1 3 1.4 0.1 3.3 0.1Z"/><path transform="translate(23.7 0)" d="M3.3 0.1 C5.2 0.1 6.5 3 6.5 7 C6.5 11 5.2 13.9 3.3 13.9 C1.4 13.9 0.1 11 0.1 7 C0.1 3 1.4 0.1 3.3 0.1Z"/></g>
<g transform="translate(571.40 608.85) translate(-15.15 -7)" fill="none" stroke="#cdcdcd" stroke-width="1.25" stroke-linecap="round" stroke-linejoin="round"><path transform="translate(0.0 0)" d="M0.3 3.3 C0.3 1.2 1.6 0.1 3.3 0.1 C5 0.1 6.3 1.3 6.3 3.3 C6.3 5.2 5 6.8 3.6 8.4 L0.2 13.9 L6.5 13.9"/><path transform="translate(7.9 0)" d="M0.1 0.1 L6.5 0.1 L2.3 13.9"/><path transform="translate(15.8 0)" d="M3.3 0.1 C5.2 0.1 6.5 3 6.5 7 C6.5 11 5.2 13.9 3.3 13.9 C1.4 13.9 0.1 11 0.1 7 C0.1 3 1.4 0.1 3.3 0.1Z"/><path transform="translate(23.7 0)" d="M3.3 0.1 C5.2 0.1 6.5 3 6.5 7 C6.5 11 5.2 13.9 3.3 13.9 C1.4 13.9 0.1 11 0.1 7 C0.1 3 1.4 0.1 3.3 0.1Z"/></g>
<g transform="translate(677.65 12.85) translate(-15.15 -7)" fill="none" stroke="#cdcdcd" stroke-width="1.25" stroke-linecap="round" stroke-linejoin="round"><path transform="translate(0.0 0)" d="M0.3 3.3 C0.3 1.2 1.6 0.1 3.3 0.1 C5 0.1 6.3 1.3 6.3 3.3 C6.3 5.2 5 6.8 3.6 8.4 L0.2 13.9 L6.5 13.9"/><path transform="translate(7.9 0)" d="M0.1 0.1 L6.5 0.1 L2.3 13.9"/><path transform="translate(15.8 0)" d="M3.3 0.1 C5.2 0.1 6.5 3 6.5 7 C6.5 11 5.2 13.9 3.3 13.9 C1.4 13.9 0.1 11 0.1 7 C0.1 3 1.4 0.1 3.3 0.1Z"/><path transform="translate(23.7 0)" d="M3.3 0.1 C5.2 0.1 6.5 3 6.5 7 C6.5 11 5.2 13.9 3.3 13.9 C1.4 13.9 0.1 11 0.1 7 C0.1 3 1.4 0.1 3.3 0.1Z"/></g>
<g transform="translate(677.65 608.85) translate(-15.15 -7)" fill="none" stroke="#cdcdcd" stroke-width="1.25" stroke-linecap="round" stroke-linejoin="round"><path transform="translate(0.0 0)" d="M0.3 3.3 C0.3 1.2 1.6 0.1 3.3 0.1 C5 0.1 6.3 1.3 6.3 3.3 C6.3 5.2 5 6.8 3.6 8.4 L0.2 13.9 L6.5 13.9"/><path transform="translate(7.9 0)" d="M0.1 0.1 L6.5 0.1 L2.3 13.9"/><path transform="translate(15.8 0)" d="M3.3 0.1 C5.2 0.1 6.5 3 6.5 7 C6.5 11 5.2 13.9 3.3 13.9 C1.4 13.9 0.1 11 0.1 7 C0.1 3 1.4 0.1 3.3 0.1Z"/><path transform="translate(23.7 0)" d="M3.3 0.1 C5.2 0.1 6.5 3 6.5 7 C6.5 11 5.2 13.9 3.3 13.9 C1.4 13.9 0.1 11 0.1 7 C0.1 3 1.4 0.1 3.3 0.1Z"/></g>
<g transform="translate(813.85 12.85) translate(-15.15 -7)" fill="none" stroke="#cdcdcd" stroke-width="1.25" stroke-linecap="round" stroke-linejoin="round"><path transform="translate(0.0 0)" d="M4.8 13.9 L4.8 0.1 L0.1 9.8 L6.6 9.8"/><path transform="translate(7.9 0)" d="M0.3 3.3 C0.3 1.2 1.6 0.1 3.3 0.1 C5 0.1 6.3 1.3 6.3 3.3 C6.3 5.2 5 6.8 3.6 8.4 L0.2 13.9 L6.5 13.9"/><path transform="translate(15.8 0)" d="M3.3 0.1 C5.2 0.1 6.5 3 6.5 7 C6.5 11 5.2 13.9 3.3 13.9 C1.4 13.9 0.1 11 0.1 7 C0.1 3 1.4 0.1 3.3 0.1Z"/><path transform="translate(23.7 0)" d="M3.3 0.1 C5.2 0.1 6.5 3 6.5 7 C6.5 11 5.2 13.9 3.3 13.9 C1.4 13.9 0.1 11 0.1 7 C0.1 3 1.4 0.1 3.3 0.1Z"/></g>
<g transform="translate(813.85 608.85) translate(-15.15 -7)" fill="none" stroke="#cdcdcd" stroke-width="1.25" stroke-linecap="round" stroke-linejoin="round"><path transform="translate(0.0 0)" d="M4.8 13.9 L4.8 0.1 L0.1 9.8 L6.6 9.8"/><path transform="translate(7.9 0)" d="M0.3 3.3 C0.3 1.2 1.6 0.1 3.3 0.1 C5 0.1 6.3 1.3 6.3 3.3 C6.3 5.2 5 6.8 3.6 8.4 L0.2 13.9 L6.5 13.9"/><path transform="translate(15.8 0)" d="M3.3 0.1 C5.2 0.1 6.5 3 6.5 7 C6.5 11 5.2 13.9 3.3 13.9 C1.4 13.9 0.1 11 0.1 7 C0.1 3 1.4 0.1 3.3 0.1Z"/><path transform="translate(23.7 0)" d="M3.3 0.1 C5.2 0.1 6.5 3 6.5 7 C6.5 11 5.2 13.9 3.3 13.9 C1.4 13.9 0.1 11 0.1 7 C0.1 3 1.4 0.1 3.3 0.1Z"/></g>
<g transform="translate(949.80 12.85) translate(-15.15 -7)" fill="none" stroke="#cdcdcd" stroke-width="1.25" stroke-linecap="round" stroke-linejoin="round"><path transform="translate(0.0 0)" d="M0.3 3.3 C0.3 1.2 1.6 0.1 3.3 0.1 C5 0.1 6.3 1.3 6.3 3.3 C6.3 5.2 5 6.8 3.6 8.4 L0.2 13.9 L6.5 13.9"/><path transform="translate(7.9 0)" d="M0.1 0.1 L6.5 0.1 L2.3 13.9"/><path transform="translate(15.8 0)" d="M3.3 0.1 C5.2 0.1 6.5 3 6.5 7 C6.5 11 5.2 13.9 3.3 13.9 C1.4 13.9 0.1 11 0.1 7 C0.1 3 1.4 0.1 3.3 0.1Z"/><path transform="translate(23.7 0)" d="M3.3 0.1 C5.2 0.1 6.5 3 6.5 7 C6.5 11 5.2 13.9 3.3 13.9 C1.4 13.9 0.1 11 0.1 7 C0.1 3 1.4 0.1 3.3 0.1Z"/></g>
<g transform="translate(949.80 608.85) translate(-15.15 -7)" fill="none" stroke="#cdcdcd" stroke-width="1.25" stroke-linecap="round" stroke-linejoin="round"><path transform="translate(0.0 0)" d="M0.3 3.3 C0.3 1.2 1.6 0.1 3.3 0.1 C5 0.1 6.3 1.3 6.3 3.3 C6.3 5.2 5 6.8 3.6 8.4 L0.2 13.9 L6.5 13.9"/><path transform="translate(7.9 0)" d="M0.1 0.1 L6.5 0.1 L2.3 13.9"/><path transform="translate(15.8 0)" d="M3.3 0.1 C5.2 0.1 6.5 3 6.5 7 C6.5 11 5.2 13.9 3.3 13.9 C1.4 13.9 0.1 11 0.1 7 C0.1 3 1.4 0.1 3.3 0.1Z"/><path transform="translate(23.7 0)" d="M3.3 0.1 C5.2 0.1 6.5 3 6.5 7 C6.5 11 5.2 13.9 3.3 13.9 C1.4 13.9 0.1 11 0.1 7 C0.1 3 1.4 0.1 3.3 0.1Z"/></g>
<g transform="translate(760.80 640.15) translate(-19.10 -7)" fill="none" stroke="#cdcdcd" stroke-width="1.25" stroke-linecap="round" stroke-linejoin="round"><path transform="translate(0.0 0)" d="M2.2 2.6 L4.2 0.1 L4.2 13.9"/><path transform="translate(7.9 0)" d="M0.3 3.3 C0.3 1.2 1.6 0.1 3.3 0.1 C5 0.1 6.3 1.3 6.3 3.3 C6.3 5.2 5 6.8 3.6 8.4 L0.2 13.9 L6.5 13.9"/><path transform="translate(15.8 0)" d="M0.3 1.9 C0.9 0.7 2 0.1 3.2 0.1 C5 0.1 6.1 1.5 6.1 3.4 C6.1 5.3 4.8 6.6 2.8 6.6 C5 6.6 6.5 8.1 6.5 10.2 C6.5 12.4 5 13.9 3.2 13.9 C1.9 13.9 0.8 13.2 0.2 12"/><path transform="translate(23.7 0)" d="M3.3 0.1 C5.2 0.1 6.5 3 6.5 7 C6.5 11 5.2 13.9 3.3 13.9 C1.4 13.9 0.1 11 0.1 7 C0.1 3 1.4 0.1 3.3 0.1Z"/><path transform="translate(31.6 0)" d="M3.3 0.1 C5.2 0.1 6.5 3 6.5 7 C6.5 11 5.2 13.9 3.3 13.9 C1.4 13.9 0.1 11 0.1 7 C0.1 3 1.4 0.1 3.3 0.1Z"/></g>
<g transform="translate(370.30 214.95) rotate(-90) translate(-15.15 -7)" fill="none" stroke="#cdcdcd" stroke-width="1.25" stroke-linecap="round" stroke-linejoin="round"><path transform="translate(0.0 0)" d="M0.3 3.3 C0.3 1.2 1.6 0.1 3.3 0.1 C5 0.1 6.3 1.3 6.3 3.3 C6.3 5.2 5 6.8 3.6 8.4 L0.2 13.9 L6.5 13.9"/><path transform="translate(7.9 0)" d="M0.1 0.1 L6.5 0.1 L2.3 13.9"/><path transform="translate(15.8 0)" d="M3.3 0.1 C5.2 0.1 6.5 3 6.5 7 C6.5 11 5.2 13.9 3.3 13.9 C1.4 13.9 0.1 11 0.1 7 C0.1 3 1.4 0.1 3.3 0.1Z"/><path transform="translate(23.7 0)" d="M3.3 0.1 C5.2 0.1 6.5 3 6.5 7 C6.5 11 5.2 13.9 3.3 13.9 C1.4 13.9 0.1 11 0.1 7 C0.1 3 1.4 0.1 3.3 0.1Z"/></g>
<g transform="translate(1130.60 214.95) rotate(-90) translate(-15.15 -7)" fill="none" stroke="#cdcdcd" stroke-width="1.25" stroke-linecap="round" stroke-linejoin="round"><path transform="translate(0.0 0)" d="M0.3 3.3 C0.3 1.2 1.6 0.1 3.3 0.1 C5 0.1 6.3 1.3 6.3 3.3 C6.3 5.2 5 6.8 3.6 8.4 L0.2 13.9 L6.5 13.9"/><path transform="translate(7.9 0)" d="M0.1 0.1 L6.5 0.1 L2.3 13.9"/><path transform="translate(15.8 0)" d="M3.3 0.1 C5.2 0.1 6.5 3 6.5 7 C6.5 11 5.2 13.9 3.3 13.9 C1.4 13.9 0.1 11 0.1 7 C0.1 3 1.4 0.1 3.3 0.1Z"/><path transform="translate(23.7 0)" d="M3.3 0.1 C5.2 0.1 6.5 3 6.5 7 C6.5 11 5.2 13.9 3.3 13.9 C1.4 13.9 0.1 11 0.1 7 C0.1 3 1.4 0.1 3.3 0.1Z"/></g>
<g transform="translate(370.30 327.30) rotate(-90) translate(-15.15 -7)" fill="none" stroke="#cdcdcd" stroke-width="1.25" stroke-linecap="round" stroke-linejoin="round"><path transform="translate(0.0 0)" d="M0.3 1.9 C0.9 0.7 2 0.1 3.2 0.1 C5 0.1 6.1 1.5 6.1 3.4 C6.1 5.3 4.8 6.6 2.8 6.6 C5 6.6 6.5 8.1 6.5 10.2 C6.5 12.4 5 13.9 3.2 13.9 C1.9 13.9 0.8 13.2 0.2 12"/><path transform="translate(7.9 0)" d="M3.3 0.1 C5.2 0.1 6.5 3 6.5 7 C6.5 11 5.2 13.9 3.3 13.9 C1.4 13.9 0.1 11 0.1 7 C0.1 3 1.4 0.1 3.3 0.1Z"/><path transform="translate(15.8 0)" d="M3.3 0.1 C5.2 0.1 6.5 3 6.5 7 C6.5 11 5.2 13.9 3.3 13.9 C1.4 13.9 0.1 11 0.1 7 C0.1 3 1.4 0.1 3.3 0.1Z"/><path transform="translate(23.7 0)" d="M3.3 0.1 C5.2 0.1 6.5 3 6.5 7 C6.5 11 5.2 13.9 3.3 13.9 C1.4 13.9 0.1 11 0.1 7 C0.1 3 1.4 0.1 3.3 0.1Z"/></g>
<g transform="translate(1130.60 327.30) rotate(-90) translate(-15.15 -7)" fill="none" stroke="#cdcdcd" stroke-width="1.25" stroke-linecap="round" stroke-linejoin="round"><path transform="translate(0.0 0)" d="M0.3 1.9 C0.9 0.7 2 0.1 3.2 0.1 C5 0.1 6.1 1.5 6.1 3.4 C6.1 5.3 4.8 6.6 2.8 6.6 C5 6.6 6.5 8.1 6.5 10.2 C6.5 12.4 5 13.9 3.2 13.9 C1.9 13.9 0.8 13.2 0.2 12"/><path transform="translate(7.9 0)" d="M3.3 0.1 C5.2 0.1 6.5 3 6.5 7 C6.5 11 5.2 13.9 3.3 13.9 C1.4 13.9 0.1 11 0.1 7 C0.1 3 1.4 0.1 3.3 0.1Z"/><path transform="translate(15.8 0)" d="M3.3 0.1 C5.2 0.1 6.5 3 6.5 7 C6.5 11 5.2 13.9 3.3 13.9 C1.4 13.9 0.1 11 0.1 7 C0.1 3 1.4 0.1 3.3 0.1Z"/><path transform="translate(23.7 0)" d="M3.3 0.1 C5.2 0.1 6.5 3 6.5 7 C6.5 11 5.2 13.9 3.3 13.9 C1.4 13.9 0.1 11 0.1 7 C0.1 3 1.4 0.1 3.3 0.1Z"/></g>
<g transform="translate(370.30 434.10) rotate(-90) translate(-15.15 -7)" fill="none" stroke="#cdcdcd" stroke-width="1.25" stroke-linecap="round" stroke-linejoin="round"><path transform="translate(0.0 0)" d="M0.3 3.3 C0.3 1.2 1.6 0.1 3.3 0.1 C5 0.1 6.3 1.3 6.3 3.3 C6.3 5.2 5 6.8 3.6 8.4 L0.2 13.9 L6.5 13.9"/><path transform="translate(7.9 0)" d="M4.8 13.9 L4.8 0.1 L0.1 9.8 L6.6 9.8"/><path transform="translate(15.8 0)" d="M3.3 0.1 C5.2 0.1 6.5 3 6.5 7 C6.5 11 5.2 13.9 3.3 13.9 C1.4 13.9 0.1 11 0.1 7 C0.1 3 1.4 0.1 3.3 0.1Z"/><path transform="translate(23.7 0)" d="M3.3 0.1 C5.2 0.1 6.5 3 6.5 7 C6.5 11 5.2 13.9 3.3 13.9 C1.4 13.9 0.1 11 0.1 7 C0.1 3 1.4 0.1 3.3 0.1Z"/></g>
<g transform="translate(1130.60 434.10) rotate(-90) translate(-15.15 -7)" fill="none" stroke="#cdcdcd" stroke-width="1.25" stroke-linecap="round" stroke-linejoin="round"><path transform="translate(0.0 0)" d="M0.3 3.3 C0.3 1.2 1.6 0.1 3.3 0.1 C5 0.1 6.3 1.3 6.3 3.3 C6.3 5.2 5 6.8 3.6 8.4 L0.2 13.9 L6.5 13.9"/><path transform="translate(7.9 0)" d="M4.8 13.9 L4.8 0.1 L0.1 9.8 L6.6 9.8"/><path transform="translate(15.8 0)" d="M3.3 0.1 C5.2 0.1 6.5 3 6.5 7 C6.5 11 5.2 13.9 3.3 13.9 C1.4 13.9 0.1 11 0.1 7 C0.1 3 1.4 0.1 3.3 0.1Z"/><path transform="translate(23.7 0)" d="M3.3 0.1 C5.2 0.1 6.5 3 6.5 7 C6.5 11 5.2 13.9 3.3 13.9 C1.4 13.9 0.1 11 0.1 7 C0.1 3 1.4 0.1 3.3 0.1Z"/></g>
<g transform="translate(338.30 321.70) rotate(-90) translate(-15.15 -7)" fill="none" stroke="#cdcdcd" stroke-width="1.25" stroke-linecap="round" stroke-linejoin="round"><path transform="translate(0.0 0)" d="M3.3 6.6 C1.6 6.6 0.5 5.2 0.5 3.35 C0.5 1.5 1.7 0.1 3.3 0.1 C4.9 0.1 6.1 1.5 6.1 3.35 C6.1 5.2 5 6.6 3.3 6.6 C1.4 6.6 0.1 8.2 0.1 10.2 C0.1 12.3 1.5 13.9 3.3 13.9 C5.1 13.9 6.5 12.3 6.5 10.2 C6.5 8.2 5.2 6.6 3.3 6.6Z"/><path transform="translate(7.9 0)" d="M2.2 2.6 L4.2 0.1 L4.2 13.9"/><path transform="translate(15.8 0)" d="M3.3 0.1 C5.2 0.1 6.5 3 6.5 7 C6.5 11 5.2 13.9 3.3 13.9 C1.4 13.9 0.1 11 0.1 7 C0.1 3 1.4 0.1 3.3 0.1Z"/><path transform="translate(23.7 0)" d="M3.3 0.1 C5.2 0.1 6.5 3 6.5 7 C6.5 11 5.2 13.9 3.3 13.9 C1.4 13.9 0.1 11 0.1 7 C0.1 3 1.4 0.1 3.3 0.1Z"/></g>
<g transform="translate(1161.70 321.70) rotate(-90) translate(-15.15 -7)" fill="none" stroke="#cdcdcd" stroke-width="1.25" stroke-linecap="round" stroke-linejoin="round"><path transform="translate(0.0 0)" d="M3.3 6.6 C1.6 6.6 0.5 5.2 0.5 3.35 C0.5 1.5 1.7 0.1 3.3 0.1 C4.9 0.1 6.1 1.5 6.1 3.35 C6.1 5.2 5 6.6 3.3 6.6 C1.4 6.6 0.1 8.2 0.1 10.2 C0.1 12.3 1.5 13.9 3.3 13.9 C5.1 13.9 6.5 12.3 6.5 10.2 C6.5 8.2 5.2 6.6 3.3 6.6Z"/><path transform="translate(7.9 0)" d="M2.2 2.6 L4.2 0.1 L4.2 13.9"/><path transform="translate(15.8 0)" d="M3.3 0.1 C5.2 0.1 6.5 3 6.5 7 C6.5 11 5.2 13.9 3.3 13.9 C1.4 13.9 0.1 11 0.1 7 C0.1 3 1.4 0.1 3.3 0.1Z"/><path transform="translate(23.7 0)" d="M3.3 0.1 C5.2 0.1 6.5 3 6.5 7 C6.5 11 5.2 13.9 3.3 13.9 C1.4 13.9 0.1 11 0.1 7 C0.1 3 1.4 0.1 3.3 0.1Z"/></g>
<line x1="601.80" y1="616.50" x2="601.80" y2="659.00" stroke="#d0d0d0" stroke-width="1.3" />
<line x1="560.40" y1="656.90" x2="642.40" y2="656.90" stroke="#d0d0d0" stroke-width="1.3" />
<line x1="16.00" y1="600.00" x2="16.00" y2="639.00" stroke="#d0d0d0" stroke-width="1.2" />
<rect x="12.5" y="638.5" width="8" height="8" fill="none" stroke="#d0d0d0" stroke-width="1.2"/>
<line x1="20.50" y1="642.50" x2="58.50" y2="642.50" stroke="#e8e8e8" stroke-width="1.3" />
<line x1="17.50" y1="585.50" x2="22.50" y2="591.00" stroke="#d0d0d0" stroke-width="1.2" />
<line x1="27.50" y1="585.50" x2="22.50" y2="591.00" stroke="#d0d0d0" stroke-width="1.2" />
<line x1="22.50" y1="591.00" x2="22.50" y2="596.50" stroke="#d0d0d0" stroke-width="1.2" />
<line x1="61.50" y1="630.50" x2="73.50" y2="642.00" stroke="#e0e0e0" stroke-width="1.2" />
<line x1="73.50" y1="630.50" x2="61.50" y2="642.00" stroke="#e0e0e0" stroke-width="1.2" /></svg>
</div>
<div class="a" style="left:680px;top:296px;width:181px;height:53px;background:rgba(0,0,0,0.62)"></div>
<svg class="a" style="left:716px;top:312px" width="22" height="22" viewBox="0 0 22 22"><circle cx="10.8" cy="10.9" r="8.6" fill="none" stroke="#fff" stroke-width="1.8"/><circle cx="7.8" cy="8.2" r="1.3" fill="#fff"/><circle cx="13.8" cy="8.2" r="1.3" fill="#fff"/><path d="M6.6 12 Q10.8 16.6 15 12" fill="none" stroke="#fff" stroke-width="1.6"/></svg>
<div class="a" style="left:745px;top:312px;font-size:16px;line-height:21px;color:#fff">最后一张了</div>
<div class="a" style="left:142px;top:501px;width:339px;height:170px;background:rgba(52,130,210,0.6)"></div>
<div class="a" style="left:172px;top:515px;font-size:24.6px;line-height:30px;color:#fff;font-weight:bold;white-space:pre">小提示</div>
<div class="a" style="left:182px;top:562px;font-size:24px;line-height:30px;color:#fff;font-weight:bold;white-space:pre">“C”</div>
<div class="a" style="left:234px;top:576.5px;width:12px;height:2.5px;background:#fff"></div>
<div class="a" style="left:260.5px;top:562px;font-size:25.2px;line-height:30px;color:#fff;font-weight:bold;white-space:pre">墙线闭合命令</div>
<svg class="a" style="left:1371px;top:36px" width="122" height="152" viewBox="0 0 122 152"><circle cx="60.4" cy="60.4" r="42" fill="none" stroke="#363636" stroke-width="17"/><rect x="38.9" y="36.5" width="43.6" height="43.8" fill="#a6a6a6"/><rect x="47" y="43" width="27" height="30" fill="#9ea2ac"/><text x="60.4" y="70" text-anchor="middle" font-size="22" fill="#7c7c7c" font-family="Liberation Sans">上</text><text x="60.4" y="16.5" text-anchor="middle" font-size="15" fill="#bdbdbd" font-family="Liberation Sans">北</text><text x="12.8" y="65.5" text-anchor="middle" font-size="15" fill="#bdbdbd" font-family="Liberation Sans">西</text><text x="108" y="65.5" text-anchor="middle" font-size="15" fill="#bdbdbd" font-family="Liberation Sans">东</text><text x="60.4" y="114" text-anchor="middle" font-size="15" fill="#bdbdbd" font-family="Liberation Sans">南</text><rect x="40.5" y="133" width="39.8" height="14" rx="3.5" fill="#9898a6"/><text x="55" y="144" text-anchor="middle" font-size="10" fill="#60606a" font-family="Liberation Sans">WCS</text><path d="M70 139 L75 139 L72.5 142Z" fill="#b8b8c4"/></svg>
<div class="a" style="left:1471px;top:205px;width:27px;height:179px;background:#3a3a3a;border-radius:3px"></div>
<svg class="a" style="left:1471px;top:205px" width="27" height="179" viewBox="0 0 27 179"><g fill="none" stroke="#555" stroke-width="1.5"><circle cx="13.5" cy="25" r="7"/><circle cx="13.5" cy="25" r="3.5"/><path d="M8 48 V40 M11 47 V36 M14 47 V35 M17 47 V37 M20 49 V42 Q20 56 13 56 Q7 56 6 48"/><path d="M6 70 L18 84 M6 84 L12 77"/><circle cx="18" cy="84" r="3.5"/><path d="M13.5 100 V120 M5 111 H22"/><ellipse cx="13.5" cy="111" rx="8" ry="3.5"/><rect x="6" y="147" width="15" height="11"/><path d="M11 150 L17 152.5 L11 155Z" fill="#555"/></g><g fill="#555"><circle cx="13.5" cy="36" r="1"/><circle cx="13.5" cy="60" r="1"/><circle cx="13.5" cy="93" r="1"/><circle cx="13.5" cy="130" r="1"/><rect x="6" y="138" width="15" height="4"/></g><circle cx="23" cy="5" r="1.8" fill="none" stroke="#555"/><circle cx="23" cy="174" r="1.8" fill="none" stroke="#555"/></svg>
<div class="a" style="left:119px;top:28px;width:345px;height:169.5px;background:#f0f0f0"></div>
<div class="a" style="left:119px;top:28px;width:345px;height:26px;background:#fff"></div>
<div class="a" style="left:121px;top:33px;font-size:12px;line-height:16px;color:#bdbdbd">绘制墙体</div>
<div class="a" style="left:122px;top:60.9px;font-size:13px;line-height:16px;color:#222;font-weight:500;letter-spacing:0.3px">高度</div>
<div class="a" style="left:149.5px;top:60.9px;font-size:13px;line-height:16px;color:#222;font-weight:bold">:</div>
<div class="a" style="left:122px;top:87.9px;font-size:13px;line-height:16px;color:#222;font-weight:500;letter-spacing:0.3px">底高</div>
<div class="a" style="left:149.5px;top:87.9px;font-size:13px;line-height:16px;color:#222;font-weight:bold">:</div>
<div class="a" style="left:122px;top:115.5px;font-size:13px;line-height:16px;color:#222;font-weight:500;letter-spacing:0.3px">材料</div>
<div class="a" style="left:149.5px;top:115.5px;font-size:13px;line-height:16px;color:#222;font-weight:bold">:</div>
<div class="a" style="left:124px;top:144.6px;font-size:13px;line-height:16px;color:#222;font-weight:500;letter-spacing:0.3px">用途</div>
<div class="a" style="left:151.5px;top:144.6px;font-size:13px;line-height:16px;color:#222;font-weight:bold">:</div>
<div class="a" style="left:164px;top:58.5px;width:109px;height:18.5px;background:#fff;border:1px solid #969696"></div>
<div class="a" style="left:168px;top:60.0px;font-size:13px;line-height:16px;color:#1e1e1e">当前层高</div>
<svg class="a" style="left:258px;top:64.8px" width="10" height="6"><polyline points="1,1 5,5 9,1" fill="none" stroke="#555" stroke-width="1.1"/></svg>
<div class="a" style="left:164px;top:85.5px;width:109px;height:19.0px;background:#fff;border:1px solid #969696"></div>
<div class="a" style="left:168px;top:87.0px;font-size:13px;line-height:16px;color:#1e1e1e">0</div>
<svg class="a" style="left:258px;top:92.0px" width="10" height="6"><polyline points="1,1 5,5 9,1" fill="none" stroke="#555" stroke-width="1.1"/></svg>
<div class="a" style="left:164px;top:113px;width:109px;height:20px;background:#e4e4e4;border:1px solid #c4c4c4"></div>
<div class="a" style="left:168px;top:114.5px;font-size:13px;line-height:16px;color:#1e1e1e">砖墙</div>
<svg class="a" style="left:258px;top:120.0px" width="10" height="6"><polyline points="1,1 5,5 9,1" fill="none" stroke="#555" stroke-width="1.1"/></svg>
<div class="a" style="left:164px;top:141.5px;width:109px;height:19.5px;background:#e4e4e4;border:1px solid #c4c4c4"></div>
<div class="a" style="left:168px;top:143.0px;font-size:13px;line-height:16px;color:#1e1e1e">一般墙</div>
<svg class="a" style="left:258px;top:148.2px" width="10" height="6"><polyline points="1,1 5,5 9,1" fill="none" stroke="#555" stroke-width="1.1"/></svg>
<div class="a" style="left:280px;top:60px;font-size:13px;line-height:16px;color:#44dd44">左宽</div>
<div class="a" style="left:373px;top:60px;font-size:13px;line-height:16px;color:#e040e0">右宽</div>
<div class="a" style="left:318px;top:58.5px;width:44px;height:18.5px;background:#fff;border:1px solid #969696"></div>
<div class="a" style="left:321px;top:60px;font-size:12.5px;line-height:16px;color:#1e1e1e">120</div>
<div class="a" style="left:408.5px;top:58.5px;width:43.5px;height:18.5px;background:#fff;border:1px solid #969696"></div>
<div class="a" style="left:411px;top:60px;font-size:12.5px;line-height:16px;color:#1e1e1e">120</div>
<div class="a" style="left:279.5px;top:79px;width:172.5px;height:62px;background:#fff;border:1px solid #a0a0a0;overflow:hidden">
<div class="a" style="left:4px;top:1.0px;font-size:11.5px;line-height:12px;color:#1e1e1e">0</div>
<div class="a" style="left:84px;top:1.0px;font-size:11.5px;line-height:12px;color:#1e1e1e">60</div>
<div class="a" style="left:4px;top:13.7px;font-size:11.5px;line-height:12px;color:#1e1e1e">0</div>
<div class="a" style="left:84px;top:13.7px;font-size:11.5px;line-height:12px;color:#1e1e1e">120</div>
<div class="a" style="left:4px;top:26.4px;font-size:11.5px;line-height:12px;color:#1e1e1e">0</div>
<div class="a" style="left:84px;top:26.4px;font-size:11.5px;line-height:12px;color:#1e1e1e">180</div>
<div class="a" style="left:4px;top:39.1px;font-size:11.5px;line-height:12px;color:#1e1e1e">0</div>
<div class="a" style="left:84px;top:39.1px;font-size:11.5px;line-height:12px;color:#1e1e1e">200</div>
<div class="a" style="left:4px;top:51.8px;font-size:11.5px;line-height:12px;color:#1e1e1e">0</div>
<div class="a" style="left:84px;top:51.8px;font-size:11.5px;line-height:12px;color:#1e1e1e">240</div>
<div class="a" style="left:154px;top:19px;width:15px;height:17px;background:#cdcdcd"></div>
<svg class="a" style="left:156px;top:6px" width="10" height="6"><polyline points="1,5 5,1 9,5" fill="none" stroke="#555" stroke-width="1.2"/></svg>
<svg class="a" style="left:156px;top:49px" width="10" height="6"><polyline points="1,1 5,5 9,1" fill="none" stroke="#555" stroke-width="1.2"/></svg>
</div>
<div class="a" style="left:280.5px;top:143.5px;width:35.1px;height:17.5px;background:#e1e1e1;border:1px solid #c8c8c8;font-size:13px;line-height:15px;text-align:center;color:#1e1e1e">左</div>
<div class="a" style="left:321px;top:143.5px;width:35.8px;height:17.5px;background:#e1e1e1;border:1px solid #c8c8c8;font-size:13px;line-height:15px;text-align:center;color:#1e1e1e">中</div>
<div class="a" style="left:363px;top:143.5px;width:35.7px;height:17.5px;background:#e1e1e1;border:1px solid #c8c8c8;font-size:13px;line-height:15px;text-align:center;color:#1e1e1e">右</div>
<div class="a" style="left:407.5px;top:143.5px;width:45.5px;height:17.5px;background:#e1e1e1;border:1px solid #c8c8c8;font-size:13px;line-height:15px;text-align:center;color:#1e1e1e">交换</div>
<div class="a" style="left:119px;top:174.5px;width:345px;height:1.5px;background:#dadada"></div>
<div class="a" style="left:119px;top:176.5px;width:19px;height:17px;background:#c8dcf0"></div>
<div class="a" style="left:210px;top:176.5px;width:20px;height:17px;background:#c8dcf0"></div>
<svg class="a" style="left:119px;top:176px" width="130" height="18" viewBox="0 0 130 18"><rect x="4" y="4" width="12" height="2.2" fill="#3a8090"/><rect x="4" y="11.5" width="12" height="2.2" fill="#3a8090"/><line x1="3" y1="9" x2="17" y2="9" stroke="#d04040" stroke-width="1"/><circle cx="3.5" cy="9" r="1" fill="#d04040"/><circle cx="16.5" cy="9" r="1" fill="#d04040"/><path d="M22 13 Q29 1 36 13" fill="none" stroke="#3a8090" stroke-width="2.2"/><path d="M24.5 14 Q29 6 33.5 14" fill="none" stroke="#3a8090" stroke-width="1.6"/><rect x="43" y="3.5" width="11" height="11" fill="#dfe" stroke="#2f6070" stroke-width="2.4"/><circle cx="42.5" cy="3.5" r="1.2" fill="#d04040"/><circle cx="54.5" cy="14.5" r="1.2" fill="#d04040"/><line x1="60.5" y1="2" x2="60.5" y2="17" stroke="#bdbdbd" stroke-width="1.2"/><path d="M70 14 L77 6" stroke="#80c0e0" stroke-width="3"/><path d="M75 8 L79 4" stroke="#1a5aa0" stroke-width="3.5"/><circle cx="79.5" cy="3.5" r="2" fill="#1a5aa0"/><line x1="86" y1="2" x2="86" y2="17" stroke="#bdbdbd" stroke-width="1.2"/><line x1="94" y1="9" x2="106" y2="9" stroke="#d04050" stroke-width="1.2"/><line x1="100.5" y1="3" x2="100.5" y2="15" stroke="#d04050" stroke-width="1.2"/><text x="119.5" y="14" text-anchor="middle" font-family="Liberation Sans" font-weight="bold" font-size="12" fill="#e02020">M</text></svg>
<div class="a" style="left:1502px;top:25px;width:20px;height:676px;background:#f0f0f0"></div>
<svg class="a" style="left:1506px;top:31px" width="12" height="8"><polyline points="1.5,6.5 6,2 10.5,6.5" fill="none" stroke="#606060" stroke-width="1.6"/></svg>
<svg class="a" style="left:1506px;top:669px" width="12" height="8"><polyline points="1.5,1.5 6,6 10.5,1.5" fill="none" stroke="#606060" stroke-width="1.6"/></svg>
<div class="a" style="left:1504px;top:406px;width:15px;height:19px;background:#cdcdcd"></div>
<div class="a" style="left:116px;top:684px;width:920px;height:16px;background:#efefef"></div>
<div class="a" style="left:116px;top:699.5px;width:1386px;height:1.5px;background:#fafafa"></div>
<div class="a" style="left:1036px;top:684px;width:466px;height:16px;background:#f0f0f0"></div>
<div class="a" style="left:1031px;top:685px;width:5px;height:14px;background:#d0d0d0"></div>
<svg class="a" style="left:1041px;top:688px" width="8" height="10"><polyline points="6,1.5 2,5 6,8.5" fill="none" stroke="#606060" stroke-width="1.6"/></svg>
<svg class="a" style="left:1489px;top:688px" width="8" height="10"><polyline points="2,1.5 6,5 2,8.5" fill="none" stroke="#606060" stroke-width="1.6"/></svg>
<div class="a" style="left:1466px;top:685px;width:18px;height:14px;background:#cdcdcd"></div>
<svg class="a" style="left:116px;top:684px" width="240" height="16" viewBox="0 0 240 16"><g fill="#f4f4f4" stroke="#dadada"><rect x="1" y="1" width="14" height="14"/><rect x="16" y="1" width="14" height="14"/><rect x="31" y="1" width="14" height="14"/><rect x="46" y="1" width="14" height="14"/></g><g fill="#666"><rect x="4" y="4" width="1.6" height="8"/><path d="M11 4 L6 8 L11 12Z"/><path d="M25 4 L20 8 L25 12Z"/><path d="M35 4 L40 8 L35 12Z"/><path d="M49 4 L54 8 L49 12Z"/><rect x="55" y="4" width="1.6" height="8"/></g><path d="M61 0 L108 0 L104 15.5 L65 15.5Z" fill="#000"/><path d="M108 0.5 L104 15.5 M172 0.5 L168 15.5 M236 0.5 L232 15.5" stroke="#888" fill="none" stroke-width="1"/></svg>
<div class="a" style="left:189px;top:684px;font-size:12.5px;line-height:16px;color:#fff">模型</div>
<div class="a" style="left:229.5px;top:684.5px;font-family:'Liberation Mono';font-size:12.5px;line-height:16px;color:#222;transform:scaleX(0.9);transform-origin:0 0">Layout1</div>
<div class="a" style="left:293.5px;top:684.5px;font-family:'Liberation Mono';font-size:12.5px;line-height:16px;color:#222;transform:scaleX(0.9);transform-origin:0 0">Layout2</div>
<div class="a" style="left:116px;top:701px;width:1422px;height:4.5px;background:#6e6e6e"></div>
<div class="a" style="left:113px;top:705.5px;width:1425px;height:22px;background:#c8c8c8"></div>
<div class="a" style="left:113px;top:727px;width:1425px;height:1.5px;background:#b6b6b6"></div>
<div class="a" style="left:113px;top:728.5px;width:1425px;height:16.5px;background:#fff"></div>
<div class="a" style="left:0;top:745px;width:1538px;height:1px;background:#2a2a2a"></div>
<div class="a" style="left:89px;top:705.5px;width:24px;height:40px;background:linear-gradient(#858585,#5e5e5e)"></div>
<svg class="a" style="left:89px;top:705px" width="24" height="41"><g fill="#b8b8b8"><rect x="3" y="4" width="1.5" height="1.5"/><rect x="6" y="4" width="1.5" height="1.5"/><rect x="9" y="4" width="3" height="1.5"/><rect x="14" y="4" width="1.5" height="1.5"/><rect x="17" y="4" width="1.5" height="1.5"/><rect x="3" y="8" width="1.5" height="1.5"/><rect x="6" y="8" width="1.5" height="1.5"/><rect x="9" y="8" width="3" height="1.5"/><rect x="14" y="8" width="1.5" height="1.5"/><rect x="17" y="8" width="1.5" height="1.5"/></g><path d="M7 20 L16 29 M16 20 L7 29" stroke="#fff" stroke-width="2"/></svg>
<div class="a" style="left:118px;top:731px;width:19px;height:15px;background:#dcdcdc;border-radius:2px"></div>
<svg class="a" style="left:118px;top:731px" width="32" height="15"><polyline points="5,4 9,7.5 5,11" fill="none" stroke="#777" stroke-width="1.3"/><line x1="10" y1="12" x2="15" y2="12" stroke="#777" stroke-width="1.2"/><path d="M22 7 L28 7 L25 10Z" fill="#777"/></svg>
<div class="a" style="left:324.2px;top:730px;width:62.4px;height:16px;background:#e2e2e2"></div>
<div class="a" style="left:391.3px;top:730px;width:96.3px;height:16px;background:#e2e2e2"></div>
<div class="a" style="left:493.1px;top:730px;width:62.4px;height:16px;background:#e2e2e2"></div>
<div class="a" style="left:561px;top:730px;width:62.2px;height:16px;background:#e2e2e2"></div>
<div class="a" style="left:113px;top:728.5px;width:1425px;height:16.5px;overflow:hidden">

</div>
<div class="a" style="left:150.5px;top:732px;height:14px;overflow:hidden;font-size:16px;line-height:18px;color:#1a1a1a;white-space:pre;font-weight:bold;transform:scaleX(0.86);transform-origin:0 0;letter-spacing:0.3px">TWALL</div>
<div class="a" style="left:203.3px;top:732px;height:14px;overflow:hidden;font-size:16px;line-height:18px;color:#3a3a3a;white-space:pre;letter-spacing:1.1px">直墙下一点或</div>
<div class="a" style="left:316.5px;top:732px;height:14px;overflow:hidden;font-size:16px;line-height:18px;color:#222;white-space:pre;">[</div>
<div class="a" style="left:324.7px;top:732px;height:14px;overflow:hidden;font-size:16px;line-height:18px;color:#3a3a3a;white-space:pre;letter-spacing:0.4px">弧墙</div>
<div class="a" style="left:360.6px;top:732px;height:14px;overflow:hidden;font-size:16px;line-height:18px;color:#333;white-space:pre;">(</div>
<div class="a" style="left:367.5px;top:732px;height:14px;overflow:hidden;font-size:16px;line-height:18px;color:#2a30d8;white-space:pre;">A</div>
<div class="a" style="left:379.5px;top:732px;height:14px;overflow:hidden;font-size:16px;line-height:18px;color:#333;white-space:pre;">)</div>
<div class="a" style="left:392.2px;top:732px;height:14px;overflow:hidden;font-size:16px;line-height:18px;color:#3a3a3a;white-space:pre;letter-spacing:1.2px">矩形画墙</div>
<div class="a" style="left:460.9px;top:732px;height:14px;overflow:hidden;font-size:16px;line-height:18px;color:#333;white-space:pre;">(</div>
<div class="a" style="left:469.2px;top:732px;height:14px;overflow:hidden;font-size:16px;line-height:18px;color:#2a30d8;white-space:pre;">R</div>
<div class="a" style="left:479.8px;top:732px;height:14px;overflow:hidden;font-size:16px;line-height:18px;color:#333;white-space:pre;">)</div>
<div class="a" style="left:494.5px;top:732px;height:14px;overflow:hidden;font-size:16px;line-height:18px;color:#3a3a3a;white-space:pre;letter-spacing:0.3px">闭合</div>
<div class="a" style="left:528.8px;top:732px;height:14px;overflow:hidden;font-size:16px;line-height:18px;color:#333;white-space:pre;">(</div>
<div class="a" style="left:537px;top:732px;height:14px;overflow:hidden;font-size:16px;line-height:18px;color:#2a30d8;white-space:pre;">C</div>
<div class="a" style="left:547.7px;top:732px;height:14px;overflow:hidden;font-size:16px;line-height:18px;color:#333;white-space:pre;">)</div>
<div class="a" style="left:562.3px;top:732px;height:14px;overflow:hidden;font-size:16px;line-height:18px;color:#3a3a3a;white-space:pre;letter-spacing:0.4px">回退</div>
<div class="a" style="left:597.4px;top:732px;height:14px;overflow:hidden;font-size:16px;line-height:18px;color:#333;white-space:pre;">(</div>
<div class="a" style="left:604.4px;top:732px;height:14px;overflow:hidden;font-size:16px;line-height:18px;color:#2a30d8;white-space:pre;">U</div>
<div class="a" style="left:615.6px;top:732px;height:14px;overflow:hidden;font-size:16px;line-height:18px;color:#333;white-space:pre;">)</div>
<div class="a" style="left:626px;top:732px;height:14px;overflow:hidden;font-size:16px;line-height:18px;color:#222;white-space:pre;">]</div>
<div class="a" style="left:633.5px;top:732px;height:14px;overflow:hidden;font-size:16px;line-height:18px;color:#333;white-space:pre;">&lt;</div>
<div class="a" style="left:643.5px;top:732px;height:14px;overflow:hidden;font-size:16px;line-height:18px;color:#3a3a3a;white-space:pre;letter-spacing:1.1px">另一段</div>
<div class="a" style="left:692.5px;top:732px;height:14px;overflow:hidden;font-size:16px;line-height:18px;color:#333;white-space:pre;">&gt;</div>
<div class="a" style="left:704.5px;top:732px;height:14px;overflow:hidden;font-size:16px;line-height:18px;color:#333;white-space:pre;">:</div>
<div class="a" style="left:723.5px;top:732px;height:14px;overflow:hidden;font-size:16px;line-height:18px;color:#222;white-space:pre;">c</div>
<div class="a" style="left:737px;top:732px;height:14px;overflow:hidden;font-size:16px;line-height:18px;color:#999;white-space:pre;font-family:"Liberation Serif";font-size:14px">I</div>
<div class="a" style="left:1292px;top:696.5px;width:107px;height:31.5px;background:#fff;border:2px solid #7a9cc8;border-radius:2px"></div>
<div class="a" style="left:1300px;top:704px;font-size:16px;line-height:18px;color:#1e5aa0">英</div>
<svg class="a" style="left:1323px;top:702px" width="70" height="22" viewBox="0 0 70 22"><path d="M10 3 A8 8 0 1 1 1 14 A7.9 7.9 0 0 0 10 3Z" fill="#1e6ad0"/><circle cx="32" cy="10" r="1.6" fill="#1e6ad0"/><path d="M35.5 12.5 L34.5 16" stroke="#1e6ad0" stroke-width="1.6"/><g transform="translate(57 11)"><circle r="5" fill="none" stroke="#1e6ad0" stroke-width="2.6"/><g stroke="#1e6ad0" stroke-width="2.4"><line x1="0" y1="-8" x2="0" y2="-5"/><line x1="0" y1="8" x2="0" y2="5"/><line x1="-8" y1="0" x2="-5" y2="0"/><line x1="8" y1="0" x2="5" y2="0"/><line x1="-5.7" y1="-5.7" x2="-3.5" y2="-3.5"/><line x1="5.7" y1="5.7" x2="3.5" y2="3.5"/><line x1="-5.7" y1="5.7" x2="-3.5" y2="3.5"/><line x1="5.7" y1="-5.7" x2="3.5" y2="-3.5"/></g></g></svg>
<div class="a" style="left:1526px;top:25px;width:12px;height:6px;background:#585858"></div>
<div class="a" style="left:1526px;top:31px;width:12px;height:329px;background:#ececec"></div>
<div class="a" style="left:1526px;top:360px;width:12px;height:8px;background:#585858"></div>
<div class="a" style="left:1526px;top:368px;width:12px;height:122px;background:#ececec"></div>
<svg class="a" style="left:1526px;top:34px" width="12" height="13" viewBox="0 0 12 13"><path d="M1 11 L9 3" stroke="#c8b090" stroke-width="3"/><circle cx="2.5" cy="10" r="2" fill="#b05020"/></svg>
<svg class="a" style="left:1526px;top:50px" width="12" height="13" viewBox="0 0 12 13"><circle cx="3" cy="4" r="2.3" fill="none" stroke="#555" stroke-width="1.1"/><line x1="5" y1="4" x2="12" y2="4" stroke="#555"/><ellipse cx="9" cy="9.5" rx="4" ry="2.5" fill="#5aa0e0"/></svg>
<svg class="a" style="left:1526px;top:67px" width="12" height="13" viewBox="0 0 12 13"><path d="M5 2 L5 12 L1 12Z" fill="none" stroke="#555" stroke-width="1.1"/><path d="M7 2 L7 12 L12 12Z" fill="#5aa0e0"/></svg>
<svg class="a" style="left:1526px;top:90px" width="12" height="13" viewBox="0 0 12 13"><path d="M1 11 Q0 6 4 6 Q5 2 9 3 Q12 4 12 7 L12 11Z" fill="none" stroke="#3a80d0" stroke-width="1.5"/></svg>
<svg class="a" style="left:1526px;top:109px" width="12" height="13" viewBox="0 0 12 13"><rect x="1" y="1" width="4.5" height="4.5" fill="none" stroke="#555"/><rect x="7" y="1" width="4.5" height="4.5" fill="#3a80d0"/><rect x="1" y="7" width="4.5" height="4.5" fill="#3a80d0"/><rect x="7" y="7" width="4.5" height="4.5" fill="#3a80d0"/></svg>
<svg class="a" style="left:1526px;top:127.6px" width="12" height="13" viewBox="0 0 12 13"><path d="M6 0 V12 M0 6 H12" stroke="#222" stroke-width="1.5"/><path d="M6 0 L4 2 H8Z M6 12 L4 10 H8Z M0 6 L2 4 V8Z M12 6 L10 4 V8Z" fill="#222"/></svg>
<svg class="a" style="left:1526px;top:146px" width="12" height="13" viewBox="0 0 12 13"><path d="M10 3 A5 5 0 1 0 11 8" fill="none" stroke="#333" stroke-width="1.4"/><path d="M8 1 L11 3 L8 5" fill="none" stroke="#333"/></svg>
<svg class="a" style="left:1526px;top:165px" width="12" height="13" viewBox="0 0 12 13"><rect x="1" y="0" width="11" height="3" fill="#3a80d0"/><rect x="1" y="5" width="7" height="7" fill="none" stroke="#444" stroke-width="1.2"/></svg>
<svg class="a" style="left:1526px;top:179px" width="12" height="13" viewBox="0 0 12 13"><rect x="1" y="1" width="9" height="11" fill="none" stroke="#444" stroke-width="1.2"/><path d="M3 8 H8" stroke="#222" stroke-width="1.5"/><rect x="9" y="2" width="3" height="8" fill="#7ab0e0"/></svg>
<svg class="a" style="left:1526px;top:196.6px" width="12" height="13" viewBox="0 0 12 13"><line x1="1" y1="11" x2="11" y2="1" stroke="#3a80d0" stroke-width="1.5"/><line x1="1" y1="6" x2="5" y2="6" stroke="#3a80d0" stroke-width="1.3"/></svg>
<svg class="a" style="left:1526px;top:212.7px" width="12" height="13" viewBox="0 0 12 13"><line x1="1" y1="6" x2="6" y2="6" stroke="#555" stroke-width="1.4"/><line x1="7" y1="10" x2="12" y2="2" stroke="#3a80d0" stroke-width="1.5"/></svg>
<svg class="a" style="left:1526px;top:238.5px" width="12" height="13" viewBox="0 0 12 13"><path d="M1 3 V11 H12 V3 H1" fill="none" stroke="#444" stroke-width="1.2"/><circle cx="11" cy="2" r="1.2" fill="#3a80d0"/></svg>
<svg class="a" style="left:1526px;top:253.60000000000002px" width="12" height="13" viewBox="0 0 12 13"><path d="M1 3 V11 H12" fill="none" stroke="#444" stroke-width="1.2"/><circle cx="3" cy="3" r="1.3" fill="#3a80d0"/><circle cx="9" cy="3" r="1.3" fill="#3a80d0"/></svg>
<svg class="a" style="left:1526px;top:277px" width="12" height="13" viewBox="0 0 12 13"><line x1="0" y1="6" x2="12" y2="6" stroke="#3a80d0" stroke-width="1.3"/><path d="M3 4 L6 6 L3 8 M9 4 L6 6 L9 8" fill="none" stroke="#3a80d0" stroke-width="1.3"/></svg>
<svg class="a" style="left:1526px;top:295.5px" width="12" height="13" viewBox="0 0 12 13"><path d="M1 12 V6 L6 1 H12" fill="none" stroke="#444" stroke-width="1.2"/><line x1="1" y1="12" x2="12" y2="12" stroke="#444"/></svg>
<svg class="a" style="left:1526px;top:314.9px" width="12" height="13" viewBox="0 0 12 13"><path d="M1 12 V7 A6 6 0 0 1 12 1" fill="none" stroke="#3a80d0" stroke-width="1.3"/><line x1="1" y1="12" x2="12" y2="12" stroke="#444"/></svg>
<svg class="a" style="left:1526px;top:331px" width="12" height="13" viewBox="0 0 12 13"><path d="M1 12 Q3 1 6 6 Q9 11 12 3" fill="none" stroke="#333" stroke-width="1.3"/></svg>
<svg class="a" style="left:1526px;top:347px" width="12" height="13" viewBox="0 0 12 13"><circle cx="6" cy="7" r="5" fill="#3a80d0"/><circle cx="6" cy="7" r="2" fill="#ececec"/></svg>
<svg class="a" style="left:1526px;top:375px" width="12" height="14"><rect x="1.5" y="1.5" width="9" height="5" fill="#f4f4f4" stroke="#555"/><rect x="4.5" y="6" width="8" height="6" fill="#8a8a8a" stroke="#555"/></svg>
<svg class="a" style="left:1526px;top:392px" width="12" height="14"><rect x="1.5" y="1.5" width="9" height="5" fill="#f4f4f4" stroke="#555"/><rect x="4.5" y="6" width="8" height="6" fill="#8a8a8a" stroke="#555"/></svg>
<svg class="a" style="left:1526px;top:413.6px" width="12" height="14"><rect x="1.5" y="1.5" width="9" height="5" fill="#f4f4f4" stroke="#555"/><rect x="4.5" y="6" width="8" height="6" fill="#8a8a8a" stroke="#555"/></svg>
<svg class="a" style="left:1526px;top:432px" width="12" height="14"><rect x="1.5" y="1.5" width="9" height="5" fill="#f4f4f4" stroke="#555"/><rect x="4.5" y="6" width="8" height="6" fill="#8a8a8a" stroke="#555"/></svg>
<div class="a" style="left:1528px;top:450px;width:10px;height:1px;background:#c0c0c0"></div>
<svg class="a" style="left:1526px;top:453px" width="12" height="14"><text x="1" y="7" font-size="6" font-family="Liberation Sans" fill="#222">ab</text><path d="M3 9 V12 H12" fill="none" stroke="#555"/></svg>
<svg class="a" style="left:1526px;top:470px" width="12" height="16"><rect x="1.5" y="1.5" width="10" height="7" fill="#8a8aa0" stroke="#555"/><path d="M6 9 V14 H12" fill="none" stroke="#555"/></svg>
</body></html>
